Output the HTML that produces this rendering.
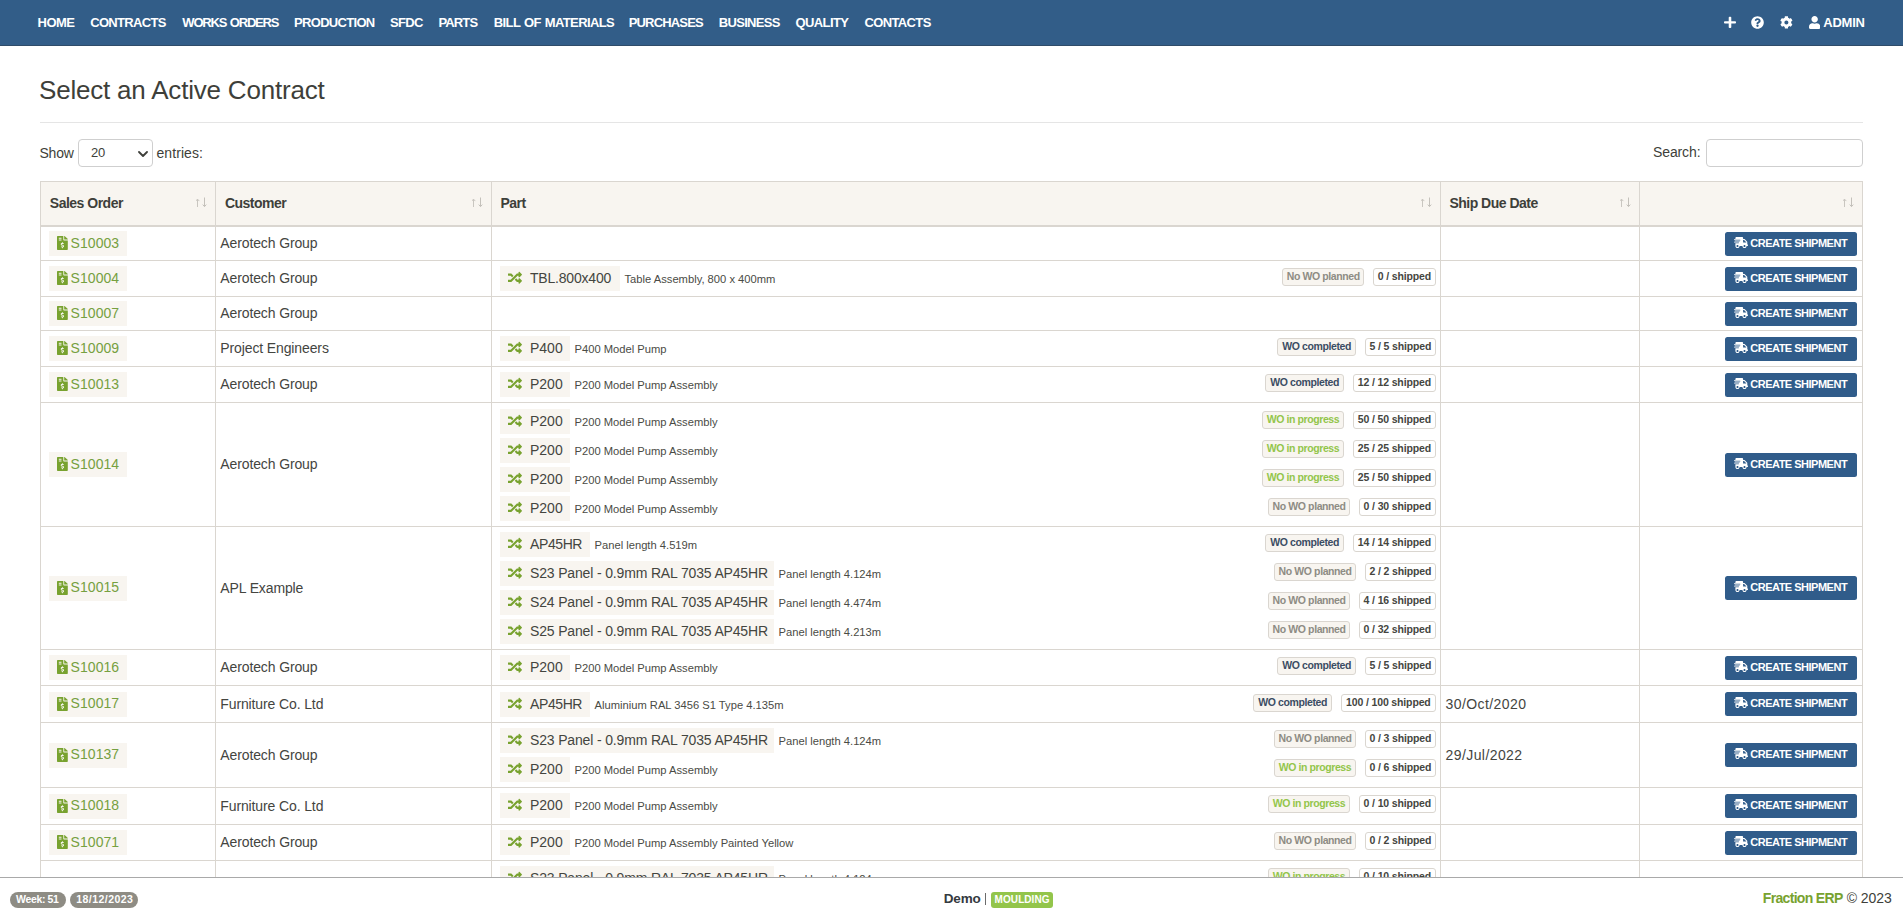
<!DOCTYPE html><html><head><meta charset="utf-8"><title>Select an Active Contract</title><style>
html,body{margin:0;padding:0;background:#fff;width:1903px;height:916px;overflow:hidden;position:relative}
body{font-family:'Liberation Sans',sans-serif;color:#3e3f3a}
.t{position:absolute;white-space:nowrap}
.a{position:absolute}
</style></head><body>
<div class="a" style="left:0;top:0;width:1903px;height:45px;background:#325d88;border-bottom:1px solid #2f4c69"></div>
<div class="t" style="left:37.5px;top:13px;font-size:13px;line-height:20px;color:#fff;font-weight:bold;letter-spacing:-0.5px">HOME</div>
<div class="t" style="left:90.2px;top:13px;font-size:13px;line-height:20px;color:#fff;font-weight:bold;letter-spacing:-0.68px">CONTRACTS</div>
<div class="t" style="left:182.3px;top:13px;font-size:13px;line-height:20px;color:#fff;font-weight:bold;letter-spacing:-1.17px;word-spacing:1px">WORKS ORDERS</div>
<div class="t" style="left:294.1px;top:13px;font-size:13px;line-height:20px;color:#fff;font-weight:bold;letter-spacing:-0.7px">PRODUCTION</div>
<div class="t" style="left:390px;top:13px;font-size:13px;line-height:20px;color:#fff;font-weight:bold;letter-spacing:-0.667px">SFDC</div>
<div class="t" style="left:438.5px;top:13px;font-size:13px;line-height:20px;color:#fff;font-weight:bold;letter-spacing:-0.875px">PARTS</div>
<div class="t" style="left:493.8px;top:13px;font-size:13px;line-height:20px;color:#fff;font-weight:bold;letter-spacing:-0.62px;word-spacing:1px">BILL OF MATERIALS</div>
<div class="t" style="left:628.7px;top:13px;font-size:13px;line-height:20px;color:#fff;font-weight:bold;letter-spacing:-0.825px">PURCHASES</div>
<div class="t" style="left:718.8px;top:13px;font-size:13px;line-height:20px;color:#fff;font-weight:bold;letter-spacing:-0.686px">BUSINESS</div>
<div class="t" style="left:795.6px;top:13px;font-size:13px;line-height:20px;color:#fff;font-weight:bold;letter-spacing:-0.62px">QUALITY</div>
<div class="t" style="left:864.4px;top:13px;font-size:13px;line-height:20px;color:#fff;font-weight:bold;letter-spacing:-0.62px">CONTACTS</div>
<div class="t" style="left:1823.3px;top:13px;font-size:13px;line-height:20px;color:#fff;font-weight:bold;letter-spacing:-0.25px">ADMIN</div>
<svg style="position:absolute;left:1723.8px;top:16px;width:12px;height:12.8px" viewBox="0 0 448 512" preserveAspectRatio="none"><path fill="#fff" d="M416 208H272V64c0-17.67-14.33-32-32-32h-32c-17.67 0-32 14.33-32 32v144H32c-17.67 0-32 14.33-32 32v32c0 17.67 14.33 32 32 32h144v144c0 17.67 14.33 32 32 32h32c17.67 0 32-14.33 32-32V304h144c17.67 0 32-14.33 32-32v-32c0-17.67-14.33-32-32-32z"/></svg>
<svg style="position:absolute;left:1750.8px;top:16.2px;width:13px;height:13px" viewBox="0 0 512 512" preserveAspectRatio="none"><path fill="#fff" d="M504 256c0 136.997-111.043 248-248 248S8 392.997 8 256C8 119.083 119.043 8 256 8s248 111.083 248 248zM262.655 90c-54.497 0-89.255 22.957-116.549 63.758-3.536 5.286-2.353 12.415 2.715 16.258l34.699 26.31c5.205 3.947 12.621 3.008 16.665-2.122 17.864-22.658 30.113-35.797 57.303-35.797 20.429 0 45.698 13.148 45.698 32.958 0 14.976-12.363 22.667-32.534 33.976C247.128 238.528 216 254.941 216 296v4c0 6.627 5.373 12 12 12h56c6.627 0 12-5.373 12-12v-1.333c0-28.462 83.186-29.647 83.186-106.667 0-58.002-60.165-102-116.531-102zM256 338c-25.365 0-46 20.635-46 46 0 25.364 20.635 46 46 46s46-20.636 46-46c0-25.365-20.635-46-46-46z"/></svg>
<svg style="position:absolute;left:1780px;top:16.2px;width:12.8px;height:12.8px" viewBox="0 0 512 512" preserveAspectRatio="none"><path fill="#fff" d="M487.4 315.7l-42.6-24.6c4.3-23.2 4.3-47 0-70.2l42.6-24.6c4.9-2.8 7.1-8.6 5.5-14-11.1-35.6-30-67.8-54.7-94.6-3.8-4.1-10-5.1-14.8-2.3L380.8 110c-17.9-15.4-38.5-27.3-60.8-35.1V25.8c0-5.6-3.9-10.5-9.4-11.7-36.7-8.2-74.3-7.800-109.2 0-5.5 1.2-9.4 6.1-9.4 11.7V75c-22.2 7.9-42.8 19.8-60.8 35.1L88.7 85.5c-4.9-2.8-11-1.9-14.8 2.3-24.7 26.7-43.6 58.9-54.7 94.6-1.7 5.4.6 11.2 5.5 14L67.3 221c-4.3 23.2-4.3 47 0 70.2l-42.6 24.6c-4.9 2.8-7.1 8.6-5.5 14 11.1 35.6 30 67.8 54.7 94.6 3.8 4.1 10 5.1 14.8 2.3l42.6-24.6c17.9 15.4 38.5 27.3 60.8 35.1v49.2c0 5.6 3.9 10.5 9.4 11.7 36.7 8.2 74.3 7.8 109.2 0 5.5-1.2 9.4-6.1 9.4-11.7v-49.2c22.2-7.9 42.8-19.8 60.8-35.1l42.6 24.6c4.9 2.8 11 1.9 14.8-2.3 24.7-26.7 43.600-58.9 54.7-94.6 1.5-5.5-.7-11.3-5.6-14.1zM256 336c-44.1 0-80-35.9-80-80s35.9-80 80-80 80 35.9 80 80-35.9 80-80 80z"/></svg>
<svg style="position:absolute;left:1809px;top:16px;width:11.3px;height:12.9px" viewBox="0 0 448 512" preserveAspectRatio="none"><path fill="#fff" d="M224 256c70.7 0 128-57.3 128-128S294.7 0 224 0 96 57.3 96 128s57.3 128 128 128zm89.6 32h-16.7c-22.2 10.2-46.9 16-72.9 16s-50.6-5.8-72.9-16h-16.7C60.2 288 0 348.2 0 422.4V464c0 26.5 21.5 48 48 48h352c26.5 0 48-21.5 48-48v-41.6c0-74.2-60.2-134.4-134.4-134.4z"/></svg>
<div class="t" style="left:39px;top:75px;font-size:26px;line-height:30px;color:#3e3f3a;font-weight:normal;letter-spacing:-0.2px">Select an Active Contract</div>
<div class="a" style="left:40px;top:122px;width:1823px;height:1px;background:#e5e5e5"></div>
<div class="t" style="left:39.5px;top:143px;font-size:14px;line-height:20px;color:#3e3f3a;font-weight:normal;letter-spacing:-0.23px">Show</div>
<div class="a" style="left:78px;top:139px;width:73px;height:26px;border:1px solid #cfcfcf;border-radius:4px;background:#fff"></div>
<div class="t" style="left:91px;top:143px;font-size:13px;line-height:20px;color:#3e3f3a;font-weight:normal;letter-spacing:-0.2px">20</div>
<svg class="a" style="left:138px;top:150.5px;width:10px;height:6px" viewBox="0 0 10 6"><path d="M1 1l4 4 4-4" fill="none" stroke="#3e3f3a" stroke-width="1.8" stroke-linecap="round" stroke-linejoin="round"/></svg>
<div class="t" style="left:156.5px;top:143px;font-size:14px;line-height:20px;color:#3e3f3a;font-weight:normal;letter-spacing:0.07px">entries:</div>
<div class="t" style="left:1653px;top:142px;font-size:14px;line-height:20px;color:#3e3f3a;font-weight:normal;letter-spacing:-0.12px">Search:</div>
<div class="a" style="left:1706px;top:139px;width:155px;height:26px;border:1px solid #cfcfcf;border-radius:4px;background:#fff"></div>
<div class="a" style="left:40px;top:181px;width:1823px;height:45px;background:#f8f5f0"></div>
<div class="a" style="left:40px;top:181px;width:1823px;height:1px;background:#dad6d0"></div>
<div class="a" style="left:40px;top:225px;width:1823px;height:2px;background:#dad6d0"></div>
<div class="t" style="left:49.800000000000004px;top:193px;font-size:14px;line-height:20px;color:#3e3f3a;font-weight:bold;letter-spacing:-0.5px">Sales Order</div>
<div class="t" style="left:224.89999999999998px;top:193px;font-size:14px;line-height:20px;color:#3e3f3a;font-weight:bold;letter-spacing:-0.5px">Customer</div>
<div class="t" style="left:500.4px;top:193px;font-size:14px;line-height:20px;color:#3e3f3a;font-weight:bold;letter-spacing:-0.5px">Part</div>
<div class="t" style="left:1449.4px;top:193px;font-size:14px;line-height:20px;color:#3e3f3a;font-weight:bold;letter-spacing:-0.5px">Ship Due Date</div>
<svg class="a" style="left:196px;top:197px;width:12px;height:11px" viewBox="0 0 12 11"><path d="M1.5 10V2.2M-0.3 4.1L1.5 2.1 3.3 4.1" fill="none" stroke="#c9c6c0" stroke-width="1"/><path d="M8.5 0.5v9M6.7 7.6L8.5 9.6 10.3 7.6" fill="none" stroke="#c4c1bb" stroke-width="1"/></svg>
<svg class="a" style="left:472px;top:197px;width:12px;height:11px" viewBox="0 0 12 11"><path d="M1.5 10V2.2M-0.3 4.1L1.5 2.1 3.3 4.1" fill="none" stroke="#c9c6c0" stroke-width="1"/><path d="M8.5 0.5v9M6.7 7.6L8.5 9.6 10.3 7.6" fill="none" stroke="#c4c1bb" stroke-width="1"/></svg>
<svg class="a" style="left:1421px;top:197px;width:12px;height:11px" viewBox="0 0 12 11"><path d="M1.5 10V2.2M-0.3 4.1L1.5 2.1 3.3 4.1" fill="none" stroke="#c9c6c0" stroke-width="1"/><path d="M8.5 0.5v9M6.7 7.6L8.5 9.6 10.3 7.6" fill="none" stroke="#c4c1bb" stroke-width="1"/></svg>
<svg class="a" style="left:1620px;top:197px;width:12px;height:11px" viewBox="0 0 12 11"><path d="M1.5 10V2.2M-0.3 4.1L1.5 2.1 3.3 4.1" fill="none" stroke="#c9c6c0" stroke-width="1"/><path d="M8.5 0.5v9M6.7 7.6L8.5 9.6 10.3 7.6" fill="none" stroke="#c4c1bb" stroke-width="1"/></svg>
<svg class="a" style="left:1843px;top:197px;width:12px;height:11px" viewBox="0 0 12 11"><path d="M1.5 10V2.2M-0.3 4.1L1.5 2.1 3.3 4.1" fill="none" stroke="#c9c6c0" stroke-width="1"/><path d="M8.5 0.5v9M6.7 7.6L8.5 9.6 10.3 7.6" fill="none" stroke="#c4c1bb" stroke-width="1"/></svg>
<div class="a" style="left:49px;top:231.0px;width:78px;height:25px;background:#f8f5f0"></div>
<svg style="position:absolute;left:56.8px;top:236.0px;width:10.8px;height:14px" viewBox="0 0 384 512" preserveAspectRatio="none"><path fill="#78a22f" d="M377 105L279.1 7c-4.5-4.5-10.6-7-17-7H256v128h128v-6.1c0-6.3-2.5-12.4-7-16.9zm-153 31V0H24C10.7 0 0 10.7 0 24v464c0 13.3 10.7 24 24 24h336c13.3 0 24-10.7 24-24V160H248c-13.2 0-24-10.8-24-24zM64 72c0-4.42 3.58-8 8-8h80c4.42 0 8 3.58 8 8v16c0 4.42-3.580 8-8 8H72c-4.42 0-8-3.58-8-8V72zm0 80v-16c0-4.42 3.58-8 8-8h80c4.42 0 8 3.58 8 8v16c0 4.42-3.58 8-8 8H72c-4.42 0-8-3.58-8-8zm144 263.88V440c0 4.42-3.58 8-8 8h-16c-4.42 0-8-3.58-8-8v-24.29c-11.29-.58-22.27-4.52-31.37-11.35-3.9-2.93-4.1-8.77-.57-12.14l11.75-11.21c2.77-2.64 6.89-2.76 10.13-.73 3.87 2.42 8.26 3.72 12.82 3.720h28.11c6.5 0 11.8-5.92 11.8-13.19 0-5.95-3.61-11.19-8.77-12.73l-45-13.5c-18.59-5.58-31.58-23.42-31.58-43.39 0-24.52 19.05-44.44 42.67-45.07V232c0-4.42 3.58-8 8-8h16c4.42 0 8 3.58 8 8v24.29c11.29.58 22.27 4.51 31.37 11.35 3.9 2.93 4.1 8.77.57 12.14l-11.75 11.21c-2.77 2.64-6.89 2.76-10.13.73-3.87-2.43-8.26-3.72-12.82-3.72h-28.11c-6.5 0-11.8 5.92-11.8 13.19 0 5.95 3.61 11.19 8.77 12.73l45 13.5c18.59 5.58 31.58 23.42 31.58 43.39 0 24.53-19.05 44.44-42.67 45.07z"/></svg>
<div class="t" style="left:70.6px;top:233px;font-size:14px;line-height:20px;color:#76a040;font-weight:normal;letter-spacing:0.05px">S10003</div>
<div class="t" style="left:220.3px;top:233px;font-size:14px;line-height:20px;color:#44453f;font-weight:normal;letter-spacing:-0.12px">Aerotech Group</div>
<div class="a" style="left:1725px;top:231.7px;width:132px;height:24px;background:#305c8a;border-radius:2.5px"></div>
<svg style="position:absolute;left:1733.9px;top:236.7px;width:14px;height:11px" viewBox="0 0 640 512" preserveAspectRatio="none"><path fill="#fff" d="M624 352h-16V243.9c0-12.7-5.1-24.9-14.1-33.9L494 110.1c-9-9-21.2-14.1-33.9-14.1H416V48c0-26.5-21.5-48-48-48H112C85.5 0 64 21.5 64 48v48H8c-4.4 0-8 3.6-8 8v16c0 4.4 3.6 8 8 8h272c4.4 0 8 3.6 8 8v16c0 4.4-3.6 8-8 8H40c-4.4 0-8 3.6-8 8v16c0 4.4 3.6 8 8 8h208c4.4 0 8 3.6 8 8v16c0 4.4-3.6 8-8 8H8c-4.4 0-8 3.6-8 8v16c0 4.4 3.6 8 8 8h208c4.4 0 8 3.6 8 8v16c0 4.4-3.6 8-8 8H64v128c0 53 43 96 96 96s96-43 96-96h128c0 53 43 96 96 96s96-43 96-96h48c8.8 0 16-7.2 16-16v-32c0-8.8-7.2-16-16-16zM160 464c-26.5 0-48-21.5-48-48s21.5-48 48-48 48 21.5 48 48-21.5 48-48 48zm320 0c-26.5 0-48-21.5-48-48s21.5-48 48-48 48 21.5 48 48-21.5 48-48 48zm80-208H416V144h44.1l99.9 99.9V256z"/></svg>
<div class="t" style="left:1750.3px;top:233px;font-size:11px;line-height:20px;color:#fff;font-weight:bold;letter-spacing:-0.5px">CREATE SHIPMENT</div>
<div class="a" style="left:40px;top:260px;width:1823px;height:1px;background:#dad6d0"></div>
<div class="a" style="left:49px;top:266.0px;width:78px;height:25px;background:#f8f5f0"></div>
<svg style="position:absolute;left:56.8px;top:271.0px;width:10.8px;height:14px" viewBox="0 0 384 512" preserveAspectRatio="none"><path fill="#78a22f" d="M377 105L279.1 7c-4.5-4.5-10.6-7-17-7H256v128h128v-6.1c0-6.3-2.5-12.4-7-16.9zm-153 31V0H24C10.7 0 0 10.7 0 24v464c0 13.3 10.7 24 24 24h336c13.3 0 24-10.7 24-24V160H248c-13.2 0-24-10.8-24-24zM64 72c0-4.42 3.58-8 8-8h80c4.42 0 8 3.58 8 8v16c0 4.42-3.580 8-8 8H72c-4.42 0-8-3.58-8-8V72zm0 80v-16c0-4.42 3.58-8 8-8h80c4.42 0 8 3.58 8 8v16c0 4.42-3.58 8-8 8H72c-4.42 0-8-3.58-8-8zm144 263.88V440c0 4.42-3.58 8-8 8h-16c-4.42 0-8-3.58-8-8v-24.29c-11.29-.58-22.27-4.52-31.37-11.35-3.9-2.93-4.1-8.77-.57-12.14l11.75-11.21c2.77-2.64 6.89-2.76 10.13-.73 3.87 2.42 8.26 3.72 12.82 3.720h28.11c6.5 0 11.8-5.92 11.8-13.19 0-5.95-3.61-11.19-8.77-12.73l-45-13.5c-18.59-5.58-31.58-23.42-31.58-43.39 0-24.52 19.05-44.44 42.67-45.07V232c0-4.42 3.58-8 8-8h16c4.42 0 8 3.58 8 8v24.29c11.29.58 22.27 4.51 31.37 11.35 3.9 2.93 4.1 8.77.57 12.14l-11.75 11.21c-2.77 2.64-6.89 2.76-10.13.73-3.87-2.43-8.26-3.72-12.82-3.72h-28.11c-6.5 0-11.8 5.92-11.8 13.19 0 5.95 3.61 11.19 8.77 12.73l45 13.5c18.59 5.58 31.58 23.42 31.58 43.39 0 24.53-19.05 44.44-42.67 45.07z"/></svg>
<div class="t" style="left:70.6px;top:268px;font-size:14px;line-height:20px;color:#76a040;font-weight:normal;letter-spacing:0.05px">S10004</div>
<div class="t" style="left:220.3px;top:268px;font-size:14px;line-height:20px;color:#44453f;font-weight:normal;letter-spacing:-0.12px">Aerotech Group</div>
<div class="a" style="left:1725px;top:266.7px;width:132px;height:24px;background:#305c8a;border-radius:2.5px"></div>
<svg style="position:absolute;left:1733.9px;top:271.7px;width:14px;height:11px" viewBox="0 0 640 512" preserveAspectRatio="none"><path fill="#fff" d="M624 352h-16V243.9c0-12.7-5.1-24.9-14.1-33.9L494 110.1c-9-9-21.2-14.1-33.9-14.1H416V48c0-26.5-21.5-48-48-48H112C85.5 0 64 21.5 64 48v48H8c-4.4 0-8 3.6-8 8v16c0 4.4 3.6 8 8 8h272c4.4 0 8 3.6 8 8v16c0 4.4-3.6 8-8 8H40c-4.4 0-8 3.6-8 8v16c0 4.4 3.6 8 8 8h208c4.4 0 8 3.6 8 8v16c0 4.4-3.6 8-8 8H8c-4.4 0-8 3.6-8 8v16c0 4.4 3.6 8 8 8h208c4.4 0 8 3.6 8 8v16c0 4.4-3.6 8-8 8H64v128c0 53 43 96 96 96s96-43 96-96h128c0 53 43 96 96 96s96-43 96-96h48c8.8 0 16-7.2 16-16v-32c0-8.8-7.2-16-16-16zM160 464c-26.5 0-48-21.5-48-48s21.5-48 48-48 48 21.5 48 48-21.5 48-48 48zm320 0c-26.5 0-48-21.5-48-48s21.5-48 48-48 48 21.5 48 48-21.5 48-48 48zm80-208H416V144h44.1l99.9 99.9V256z"/></svg>
<div class="t" style="left:1750.3px;top:268px;font-size:11px;line-height:20px;color:#fff;font-weight:bold;letter-spacing:-0.5px">CREATE SHIPMENT</div>
<div class="a" style="left:500px;top:266px;width:120px;height:25px;background:#f8f5f0"></div>
<svg style="position:absolute;left:507.9px;top:271.3px;width:14px;height:13.5px" viewBox="0 0 512 512" preserveAspectRatio="none"><path fill="#78a22f" d="M504.971 359.029c9.373 9.373 9.373 24.569 0 33.941l-80 79.984c-15.01 15.01-40.971 4.49-40.971-16.971V416h-58.785a12.004 12.004 0 0 1-8.773-3.812l-70.556-75.596 53.333-57.143L352 336h32v-39.981c0-21.438 25.943-31.998 40.971-16.971l80 79.981zM12 176h84l52.781 56.551 53.333-57.143-70.556-75.596A11.999 11.999 0 0 0 122.785 96H12c-6.627 0-12 5.373-12 12v56c0 6.627 5.373 12 12 12zm372 0v39.984c0 21.460 25.961 31.980 40.971 16.971l80-79.984c9.373-9.373 9.373-24.569 0-33.941l-80-79.981C409.943 24.021 384 34.582 384 56.019V96h-58.785a12.004 12.004 0 0 0-8.773 3.812L96 336H12c-6.627 0-12 5.373-12 12v56c0 6.627 5.373 12 12 12h110.785c3.326 0 6.503-1.381 8.773-3.812L352 176h32z"/></svg>
<div class="t" style="left:530px;top:268px;font-size:14px;line-height:20px;color:#44453f;font-weight:normal;letter-spacing:-0.2px">TBL.800x400</div>
<div class="t" style="left:624.5px;top:269px;font-size:11.2px;line-height:20px;color:#4a4b45;font-weight:normal;letter-spacing:0px">Table Assembly, 800 x 400mm</div>
<div class="a" style="left:1373.3px;top:268px;width:62.3px;height:18px;box-sizing:border-box;border:1px solid #dad6d0;border-radius:3px;background:#fff"></div>
<div class="t" style="left:1373.3px;top:269.6px;width:62.3px;text-align:center;font-size:10.5px;line-height:12px;font-weight:bold;color:#45463f;letter-spacing:-0.14px">0 / shipped</div>
<div class="a" style="left:1282.3px;top:268px;width:82px;height:18px;box-sizing:border-box;border:1px solid #dad6d0;border-radius:3px;background:#f8f5f0"></div>
<div class="t" style="left:1282.3px;top:269.6px;width:82px;text-align:center;font-size:10.5px;line-height:12px;font-weight:bold;color:#8e8c84;letter-spacing:-0.4px">No WO planned</div>
<div class="a" style="left:40px;top:296px;width:1823px;height:1px;background:#dad6d0"></div>
<div class="a" style="left:49px;top:301.0px;width:78px;height:25px;background:#f8f5f0"></div>
<svg style="position:absolute;left:56.8px;top:306.0px;width:10.8px;height:14px" viewBox="0 0 384 512" preserveAspectRatio="none"><path fill="#78a22f" d="M377 105L279.1 7c-4.5-4.5-10.6-7-17-7H256v128h128v-6.1c0-6.3-2.5-12.4-7-16.9zm-153 31V0H24C10.7 0 0 10.7 0 24v464c0 13.3 10.7 24 24 24h336c13.3 0 24-10.7 24-24V160H248c-13.2 0-24-10.8-24-24zM64 72c0-4.42 3.58-8 8-8h80c4.42 0 8 3.58 8 8v16c0 4.42-3.580 8-8 8H72c-4.42 0-8-3.58-8-8V72zm0 80v-16c0-4.42 3.58-8 8-8h80c4.42 0 8 3.58 8 8v16c0 4.42-3.58 8-8 8H72c-4.42 0-8-3.58-8-8zm144 263.88V440c0 4.42-3.58 8-8 8h-16c-4.42 0-8-3.58-8-8v-24.29c-11.29-.58-22.27-4.52-31.37-11.35-3.9-2.93-4.1-8.77-.57-12.14l11.75-11.21c2.77-2.64 6.89-2.76 10.13-.73 3.87 2.42 8.26 3.72 12.82 3.720h28.11c6.5 0 11.8-5.92 11.8-13.19 0-5.95-3.61-11.19-8.77-12.73l-45-13.5c-18.59-5.58-31.58-23.42-31.58-43.39 0-24.52 19.05-44.44 42.67-45.07V232c0-4.42 3.58-8 8-8h16c4.42 0 8 3.58 8 8v24.29c11.29.58 22.27 4.51 31.37 11.35 3.9 2.93 4.1 8.77.57 12.14l-11.75 11.21c-2.77 2.64-6.89 2.76-10.13.73-3.87-2.43-8.26-3.72-12.82-3.72h-28.11c-6.5 0-11.8 5.92-11.8 13.19 0 5.95 3.61 11.19 8.77 12.73l45 13.5c18.59 5.58 31.58 23.42 31.58 43.39 0 24.53-19.05 44.44-42.67 45.07z"/></svg>
<div class="t" style="left:70.6px;top:303px;font-size:14px;line-height:20px;color:#76a040;font-weight:normal;letter-spacing:0.05px">S10007</div>
<div class="t" style="left:220.3px;top:303px;font-size:14px;line-height:20px;color:#44453f;font-weight:normal;letter-spacing:-0.12px">Aerotech Group</div>
<div class="a" style="left:1725px;top:301.7px;width:132px;height:24px;background:#305c8a;border-radius:2.5px"></div>
<svg style="position:absolute;left:1733.9px;top:306.7px;width:14px;height:11px" viewBox="0 0 640 512" preserveAspectRatio="none"><path fill="#fff" d="M624 352h-16V243.9c0-12.7-5.1-24.9-14.1-33.9L494 110.1c-9-9-21.2-14.1-33.9-14.1H416V48c0-26.5-21.5-48-48-48H112C85.5 0 64 21.5 64 48v48H8c-4.4 0-8 3.6-8 8v16c0 4.4 3.6 8 8 8h272c4.4 0 8 3.6 8 8v16c0 4.4-3.6 8-8 8H40c-4.4 0-8 3.6-8 8v16c0 4.4 3.6 8 8 8h208c4.4 0 8 3.6 8 8v16c0 4.4-3.6 8-8 8H8c-4.4 0-8 3.6-8 8v16c0 4.4 3.6 8 8 8h208c4.4 0 8 3.6 8 8v16c0 4.4-3.6 8-8 8H64v128c0 53 43 96 96 96s96-43 96-96h128c0 53 43 96 96 96s96-43 96-96h48c8.8 0 16-7.2 16-16v-32c0-8.8-7.2-16-16-16zM160 464c-26.5 0-48-21.5-48-48s21.5-48 48-48 48 21.5 48 48-21.5 48-48 48zm320 0c-26.5 0-48-21.5-48-48s21.5-48 48-48 48 21.5 48 48-21.5 48-48 48zm80-208H416V144h44.1l99.9 99.9V256z"/></svg>
<div class="t" style="left:1750.3px;top:303px;font-size:11px;line-height:20px;color:#fff;font-weight:bold;letter-spacing:-0.5px">CREATE SHIPMENT</div>
<div class="a" style="left:40px;top:330px;width:1823px;height:1px;background:#dad6d0"></div>
<div class="a" style="left:49px;top:336.0px;width:78px;height:25px;background:#f8f5f0"></div>
<svg style="position:absolute;left:56.8px;top:341.0px;width:10.8px;height:14px" viewBox="0 0 384 512" preserveAspectRatio="none"><path fill="#78a22f" d="M377 105L279.1 7c-4.5-4.5-10.6-7-17-7H256v128h128v-6.1c0-6.3-2.5-12.4-7-16.9zm-153 31V0H24C10.7 0 0 10.7 0 24v464c0 13.3 10.7 24 24 24h336c13.3 0 24-10.7 24-24V160H248c-13.2 0-24-10.8-24-24zM64 72c0-4.42 3.58-8 8-8h80c4.42 0 8 3.58 8 8v16c0 4.42-3.580 8-8 8H72c-4.42 0-8-3.58-8-8V72zm0 80v-16c0-4.42 3.58-8 8-8h80c4.42 0 8 3.58 8 8v16c0 4.42-3.58 8-8 8H72c-4.42 0-8-3.58-8-8zm144 263.88V440c0 4.42-3.58 8-8 8h-16c-4.42 0-8-3.58-8-8v-24.29c-11.29-.58-22.27-4.52-31.37-11.35-3.9-2.93-4.1-8.77-.57-12.14l11.75-11.21c2.77-2.64 6.89-2.76 10.13-.73 3.87 2.42 8.26 3.72 12.82 3.720h28.11c6.5 0 11.8-5.92 11.8-13.19 0-5.95-3.61-11.19-8.77-12.73l-45-13.5c-18.59-5.58-31.58-23.42-31.58-43.39 0-24.52 19.05-44.44 42.67-45.07V232c0-4.42 3.58-8 8-8h16c4.42 0 8 3.58 8 8v24.29c11.29.58 22.27 4.51 31.37 11.35 3.9 2.93 4.1 8.77.57 12.14l-11.75 11.21c-2.77 2.64-6.89 2.76-10.13.73-3.87-2.43-8.26-3.72-12.82-3.72h-28.11c-6.5 0-11.8 5.92-11.8 13.19 0 5.95 3.61 11.19 8.77 12.73l45 13.5c18.59 5.58 31.58 23.42 31.58 43.39 0 24.53-19.05 44.44-42.67 45.07z"/></svg>
<div class="t" style="left:70.6px;top:338px;font-size:14px;line-height:20px;color:#76a040;font-weight:normal;letter-spacing:0.05px">S10009</div>
<div class="t" style="left:220.3px;top:338px;font-size:14px;line-height:20px;color:#44453f;font-weight:normal;letter-spacing:-0.12px">Project Engineers</div>
<div class="a" style="left:1725px;top:336.7px;width:132px;height:24px;background:#305c8a;border-radius:2.5px"></div>
<svg style="position:absolute;left:1733.9px;top:341.7px;width:14px;height:11px" viewBox="0 0 640 512" preserveAspectRatio="none"><path fill="#fff" d="M624 352h-16V243.9c0-12.7-5.1-24.9-14.1-33.9L494 110.1c-9-9-21.2-14.1-33.9-14.1H416V48c0-26.5-21.5-48-48-48H112C85.5 0 64 21.5 64 48v48H8c-4.4 0-8 3.6-8 8v16c0 4.4 3.6 8 8 8h272c4.4 0 8 3.6 8 8v16c0 4.4-3.6 8-8 8H40c-4.4 0-8 3.6-8 8v16c0 4.4 3.6 8 8 8h208c4.4 0 8 3.6 8 8v16c0 4.4-3.6 8-8 8H8c-4.4 0-8 3.6-8 8v16c0 4.4 3.6 8 8 8h208c4.4 0 8 3.6 8 8v16c0 4.4-3.6 8-8 8H64v128c0 53 43 96 96 96s96-43 96-96h128c0 53 43 96 96 96s96-43 96-96h48c8.8 0 16-7.2 16-16v-32c0-8.8-7.2-16-16-16zM160 464c-26.5 0-48-21.5-48-48s21.5-48 48-48 48 21.5 48 48-21.5 48-48 48zm320 0c-26.5 0-48-21.5-48-48s21.5-48 48-48 48 21.5 48 48-21.5 48-48 48zm80-208H416V144h44.1l99.9 99.9V256z"/></svg>
<div class="t" style="left:1750.3px;top:338px;font-size:11px;line-height:20px;color:#fff;font-weight:bold;letter-spacing:-0.5px">CREATE SHIPMENT</div>
<div class="a" style="left:500px;top:336px;width:70px;height:25px;background:#f8f5f0"></div>
<svg style="position:absolute;left:507.9px;top:341.3px;width:14px;height:13.5px" viewBox="0 0 512 512" preserveAspectRatio="none"><path fill="#78a22f" d="M504.971 359.029c9.373 9.373 9.373 24.569 0 33.941l-80 79.984c-15.01 15.01-40.971 4.49-40.971-16.971V416h-58.785a12.004 12.004 0 0 1-8.773-3.812l-70.556-75.596 53.333-57.143L352 336h32v-39.981c0-21.438 25.943-31.998 40.971-16.971l80 79.981zM12 176h84l52.781 56.551 53.333-57.143-70.556-75.596A11.999 11.999 0 0 0 122.785 96H12c-6.627 0-12 5.373-12 12v56c0 6.627 5.373 12 12 12zm372 0v39.984c0 21.460 25.961 31.980 40.971 16.971l80-79.984c9.373-9.373 9.373-24.569 0-33.941l-80-79.981C409.943 24.021 384 34.582 384 56.019V96h-58.785a12.004 12.004 0 0 0-8.773 3.812L96 336H12c-6.627 0-12 5.373-12 12v56c0 6.627 5.373 12 12 12h110.785c3.326 0 6.503-1.381 8.773-3.812L352 176h32z"/></svg>
<div class="t" style="left:530px;top:338px;font-size:14px;line-height:20px;color:#44453f;font-weight:normal;letter-spacing:0px">P400</div>
<div class="t" style="left:574.5px;top:339px;font-size:11.2px;line-height:20px;color:#4a4b45;font-weight:normal;letter-spacing:0px">P400 Model Pump</div>
<div class="a" style="left:1365.1px;top:338px;width:70.5px;height:18px;box-sizing:border-box;border:1px solid #dad6d0;border-radius:3px;background:#fff"></div>
<div class="t" style="left:1365.1px;top:339.6px;width:70.5px;text-align:center;font-size:10.5px;line-height:12px;font-weight:bold;color:#45463f;letter-spacing:-0.14px">5 / 5 shipped</div>
<div class="a" style="left:1277.1px;top:338px;width:79px;height:18px;box-sizing:border-box;border:1px solid #dad6d0;border-radius:3px;background:#f8f5f0"></div>
<div class="t" style="left:1277.1px;top:339.6px;width:79px;text-align:center;font-size:10.5px;line-height:12px;font-weight:bold;color:#3b4d63;letter-spacing:-0.4px">WO completed</div>
<div class="a" style="left:40px;top:366px;width:1823px;height:1px;background:#dad6d0"></div>
<div class="a" style="left:49px;top:372.0px;width:78px;height:25px;background:#f8f5f0"></div>
<svg style="position:absolute;left:56.8px;top:377.0px;width:10.8px;height:14px" viewBox="0 0 384 512" preserveAspectRatio="none"><path fill="#78a22f" d="M377 105L279.1 7c-4.5-4.5-10.6-7-17-7H256v128h128v-6.1c0-6.3-2.5-12.4-7-16.9zm-153 31V0H24C10.7 0 0 10.7 0 24v464c0 13.3 10.7 24 24 24h336c13.3 0 24-10.7 24-24V160H248c-13.2 0-24-10.8-24-24zM64 72c0-4.42 3.58-8 8-8h80c4.42 0 8 3.58 8 8v16c0 4.42-3.580 8-8 8H72c-4.42 0-8-3.58-8-8V72zm0 80v-16c0-4.42 3.58-8 8-8h80c4.42 0 8 3.58 8 8v16c0 4.42-3.58 8-8 8H72c-4.42 0-8-3.58-8-8zm144 263.88V440c0 4.42-3.58 8-8 8h-16c-4.42 0-8-3.58-8-8v-24.29c-11.29-.58-22.27-4.52-31.37-11.35-3.9-2.93-4.1-8.77-.57-12.14l11.75-11.21c2.77-2.64 6.89-2.76 10.13-.73 3.87 2.42 8.26 3.72 12.82 3.720h28.11c6.5 0 11.8-5.92 11.8-13.19 0-5.95-3.61-11.19-8.77-12.73l-45-13.5c-18.59-5.58-31.58-23.42-31.58-43.39 0-24.52 19.05-44.44 42.67-45.07V232c0-4.42 3.58-8 8-8h16c4.42 0 8 3.58 8 8v24.29c11.29.58 22.27 4.51 31.37 11.35 3.9 2.93 4.1 8.77.57 12.14l-11.75 11.21c-2.77 2.64-6.89 2.76-10.13.73-3.87-2.43-8.26-3.72-12.82-3.72h-28.11c-6.5 0-11.8 5.92-11.8 13.19 0 5.95 3.61 11.19 8.77 12.73l45 13.5c18.59 5.58 31.58 23.42 31.58 43.39 0 24.53-19.05 44.44-42.67 45.07z"/></svg>
<div class="t" style="left:70.6px;top:374px;font-size:14px;line-height:20px;color:#76a040;font-weight:normal;letter-spacing:0.05px">S10013</div>
<div class="t" style="left:220.3px;top:374px;font-size:14px;line-height:20px;color:#44453f;font-weight:normal;letter-spacing:-0.12px">Aerotech Group</div>
<div class="a" style="left:1725px;top:372.7px;width:132px;height:24px;background:#305c8a;border-radius:2.5px"></div>
<svg style="position:absolute;left:1733.9px;top:377.7px;width:14px;height:11px" viewBox="0 0 640 512" preserveAspectRatio="none"><path fill="#fff" d="M624 352h-16V243.9c0-12.7-5.1-24.9-14.1-33.9L494 110.1c-9-9-21.2-14.1-33.9-14.1H416V48c0-26.5-21.5-48-48-48H112C85.5 0 64 21.5 64 48v48H8c-4.4 0-8 3.6-8 8v16c0 4.4 3.6 8 8 8h272c4.4 0 8 3.6 8 8v16c0 4.4-3.6 8-8 8H40c-4.4 0-8 3.6-8 8v16c0 4.4 3.6 8 8 8h208c4.4 0 8 3.6 8 8v16c0 4.4-3.6 8-8 8H8c-4.4 0-8 3.6-8 8v16c0 4.4 3.6 8 8 8h208c4.4 0 8 3.6 8 8v16c0 4.4-3.6 8-8 8H64v128c0 53 43 96 96 96s96-43 96-96h128c0 53 43 96 96 96s96-43 96-96h48c8.8 0 16-7.2 16-16v-32c0-8.8-7.2-16-16-16zM160 464c-26.5 0-48-21.5-48-48s21.5-48 48-48 48 21.5 48 48-21.5 48-48 48zm320 0c-26.5 0-48-21.5-48-48s21.5-48 48-48 48 21.5 48 48-21.5 48-48 48zm80-208H416V144h44.1l99.9 99.9V256z"/></svg>
<div class="t" style="left:1750.3px;top:374px;font-size:11px;line-height:20px;color:#fff;font-weight:bold;letter-spacing:-0.5px">CREATE SHIPMENT</div>
<div class="a" style="left:500px;top:372px;width:70px;height:25px;background:#f8f5f0"></div>
<svg style="position:absolute;left:507.9px;top:377.3px;width:14px;height:13.5px" viewBox="0 0 512 512" preserveAspectRatio="none"><path fill="#78a22f" d="M504.971 359.029c9.373 9.373 9.373 24.569 0 33.941l-80 79.984c-15.01 15.01-40.971 4.49-40.971-16.971V416h-58.785a12.004 12.004 0 0 1-8.773-3.812l-70.556-75.596 53.333-57.143L352 336h32v-39.981c0-21.438 25.943-31.998 40.971-16.971l80 79.981zM12 176h84l52.781 56.551 53.333-57.143-70.556-75.596A11.999 11.999 0 0 0 122.785 96H12c-6.627 0-12 5.373-12 12v56c0 6.627 5.373 12 12 12zm372 0v39.984c0 21.460 25.961 31.980 40.971 16.971l80-79.984c9.373-9.373 9.373-24.569 0-33.941l-80-79.981C409.943 24.021 384 34.582 384 56.019V96h-58.785a12.004 12.004 0 0 0-8.773 3.812L96 336H12c-6.627 0-12 5.373-12 12v56c0 6.627 5.373 12 12 12h110.785c3.326 0 6.503-1.381 8.773-3.812L352 176h32z"/></svg>
<div class="t" style="left:530px;top:374px;font-size:14px;line-height:20px;color:#44453f;font-weight:normal;letter-spacing:0px">P200</div>
<div class="t" style="left:574.5px;top:375px;font-size:11.2px;line-height:20px;color:#4a4b45;font-weight:normal;letter-spacing:0px">P200 Model Pump Assembly</div>
<div class="a" style="left:1353.1px;top:374px;width:82.5px;height:18px;box-sizing:border-box;border:1px solid #dad6d0;border-radius:3px;background:#fff"></div>
<div class="t" style="left:1353.1px;top:375.6px;width:82.5px;text-align:center;font-size:10.5px;line-height:12px;font-weight:bold;color:#45463f;letter-spacing:-0.14px">12 / 12 shipped</div>
<div class="a" style="left:1265.1px;top:374px;width:79px;height:18px;box-sizing:border-box;border:1px solid #dad6d0;border-radius:3px;background:#f8f5f0"></div>
<div class="t" style="left:1265.1px;top:375.6px;width:79px;text-align:center;font-size:10.5px;line-height:12px;font-weight:bold;color:#3b4d63;letter-spacing:-0.4px">WO completed</div>
<div class="a" style="left:40px;top:402px;width:1823px;height:1px;background:#dad6d0"></div>
<div class="a" style="left:49px;top:452.0px;width:78px;height:25px;background:#f8f5f0"></div>
<svg style="position:absolute;left:56.8px;top:457.0px;width:10.8px;height:14px" viewBox="0 0 384 512" preserveAspectRatio="none"><path fill="#78a22f" d="M377 105L279.1 7c-4.5-4.5-10.6-7-17-7H256v128h128v-6.1c0-6.3-2.5-12.4-7-16.9zm-153 31V0H24C10.7 0 0 10.7 0 24v464c0 13.3 10.7 24 24 24h336c13.3 0 24-10.7 24-24V160H248c-13.2 0-24-10.8-24-24zM64 72c0-4.42 3.58-8 8-8h80c4.42 0 8 3.58 8 8v16c0 4.42-3.580 8-8 8H72c-4.42 0-8-3.58-8-8V72zm0 80v-16c0-4.42 3.58-8 8-8h80c4.42 0 8 3.58 8 8v16c0 4.42-3.58 8-8 8H72c-4.42 0-8-3.58-8-8zm144 263.88V440c0 4.42-3.58 8-8 8h-16c-4.42 0-8-3.58-8-8v-24.29c-11.29-.58-22.27-4.52-31.37-11.35-3.9-2.93-4.1-8.77-.57-12.14l11.75-11.21c2.77-2.64 6.89-2.76 10.13-.73 3.87 2.42 8.26 3.72 12.82 3.720h28.11c6.5 0 11.8-5.92 11.8-13.19 0-5.95-3.61-11.19-8.77-12.73l-45-13.5c-18.59-5.58-31.58-23.42-31.58-43.39 0-24.52 19.05-44.44 42.67-45.07V232c0-4.42 3.58-8 8-8h16c4.42 0 8 3.58 8 8v24.29c11.29.58 22.27 4.51 31.37 11.35 3.9 2.93 4.1 8.77.57 12.14l-11.75 11.21c-2.77 2.64-6.89 2.76-10.13.73-3.87-2.43-8.26-3.72-12.82-3.72h-28.11c-6.5 0-11.8 5.92-11.8 13.19 0 5.95 3.61 11.19 8.77 12.73l45 13.5c18.59 5.58 31.58 23.42 31.58 43.39 0 24.53-19.05 44.44-42.67 45.07z"/></svg>
<div class="t" style="left:70.6px;top:454px;font-size:14px;line-height:20px;color:#76a040;font-weight:normal;letter-spacing:0.05px">S10014</div>
<div class="t" style="left:220.3px;top:454px;font-size:14px;line-height:20px;color:#44453f;font-weight:normal;letter-spacing:-0.12px">Aerotech Group</div>
<div class="a" style="left:1725px;top:452.7px;width:132px;height:24px;background:#305c8a;border-radius:2.5px"></div>
<svg style="position:absolute;left:1733.9px;top:457.7px;width:14px;height:11px" viewBox="0 0 640 512" preserveAspectRatio="none"><path fill="#fff" d="M624 352h-16V243.9c0-12.7-5.1-24.9-14.1-33.9L494 110.1c-9-9-21.2-14.1-33.9-14.1H416V48c0-26.5-21.5-48-48-48H112C85.5 0 64 21.5 64 48v48H8c-4.4 0-8 3.6-8 8v16c0 4.4 3.6 8 8 8h272c4.4 0 8 3.6 8 8v16c0 4.4-3.6 8-8 8H40c-4.4 0-8 3.6-8 8v16c0 4.4 3.6 8 8 8h208c4.4 0 8 3.6 8 8v16c0 4.4-3.6 8-8 8H8c-4.4 0-8 3.6-8 8v16c0 4.4 3.6 8 8 8h208c4.4 0 8 3.6 8 8v16c0 4.4-3.6 8-8 8H64v128c0 53 43 96 96 96s96-43 96-96h128c0 53 43 96 96 96s96-43 96-96h48c8.8 0 16-7.2 16-16v-32c0-8.8-7.2-16-16-16zM160 464c-26.5 0-48-21.5-48-48s21.5-48 48-48 48 21.5 48 48-21.5 48-48 48zm320 0c-26.5 0-48-21.5-48-48s21.5-48 48-48 48 21.5 48 48-21.5 48-48 48zm80-208H416V144h44.1l99.9 99.9V256z"/></svg>
<div class="t" style="left:1750.3px;top:454px;font-size:11px;line-height:20px;color:#fff;font-weight:bold;letter-spacing:-0.5px">CREATE SHIPMENT</div>
<div class="a" style="left:500px;top:409px;width:70px;height:25px;background:#f8f5f0"></div>
<svg style="position:absolute;left:507.9px;top:414.3px;width:14px;height:13.5px" viewBox="0 0 512 512" preserveAspectRatio="none"><path fill="#78a22f" d="M504.971 359.029c9.373 9.373 9.373 24.569 0 33.941l-80 79.984c-15.01 15.01-40.971 4.49-40.971-16.971V416h-58.785a12.004 12.004 0 0 1-8.773-3.812l-70.556-75.596 53.333-57.143L352 336h32v-39.981c0-21.438 25.943-31.998 40.971-16.971l80 79.981zM12 176h84l52.781 56.551 53.333-57.143-70.556-75.596A11.999 11.999 0 0 0 122.785 96H12c-6.627 0-12 5.373-12 12v56c0 6.627 5.373 12 12 12zm372 0v39.984c0 21.460 25.961 31.980 40.971 16.971l80-79.984c9.373-9.373 9.373-24.569 0-33.941l-80-79.981C409.943 24.021 384 34.582 384 56.019V96h-58.785a12.004 12.004 0 0 0-8.773 3.812L96 336H12c-6.627 0-12 5.373-12 12v56c0 6.627 5.373 12 12 12h110.785c3.326 0 6.503-1.381 8.773-3.812L352 176h32z"/></svg>
<div class="t" style="left:530px;top:411px;font-size:14px;line-height:20px;color:#44453f;font-weight:normal;letter-spacing:0px">P200</div>
<div class="t" style="left:574.5px;top:412px;font-size:11.2px;line-height:20px;color:#4a4b45;font-weight:normal;letter-spacing:0px">P200 Model Pump Assembly</div>
<div class="a" style="left:1353.1px;top:411px;width:82.5px;height:18px;box-sizing:border-box;border:1px solid #dad6d0;border-radius:3px;background:#fff"></div>
<div class="t" style="left:1353.1px;top:412.6px;width:82.5px;text-align:center;font-size:10.5px;line-height:12px;font-weight:bold;color:#45463f;letter-spacing:-0.14px">50 / 50 shipped</div>
<div class="a" style="left:1261.8px;top:411px;width:82.3px;height:18px;box-sizing:border-box;border:1px solid #dad6d0;border-radius:3px;background:#f8f5f0"></div>
<div class="t" style="left:1261.8px;top:412.6px;width:82.3px;text-align:center;font-size:10.5px;line-height:12px;font-weight:bold;color:#93c54b;letter-spacing:-0.4px">WO in progress</div>
<div class="a" style="left:500px;top:438px;width:70px;height:25px;background:#f8f5f0"></div>
<svg style="position:absolute;left:507.9px;top:443.3px;width:14px;height:13.5px" viewBox="0 0 512 512" preserveAspectRatio="none"><path fill="#78a22f" d="M504.971 359.029c9.373 9.373 9.373 24.569 0 33.941l-80 79.984c-15.01 15.01-40.971 4.49-40.971-16.971V416h-58.785a12.004 12.004 0 0 1-8.773-3.812l-70.556-75.596 53.333-57.143L352 336h32v-39.981c0-21.438 25.943-31.998 40.971-16.971l80 79.981zM12 176h84l52.781 56.551 53.333-57.143-70.556-75.596A11.999 11.999 0 0 0 122.785 96H12c-6.627 0-12 5.373-12 12v56c0 6.627 5.373 12 12 12zm372 0v39.984c0 21.460 25.961 31.980 40.971 16.971l80-79.984c9.373-9.373 9.373-24.569 0-33.941l-80-79.981C409.943 24.021 384 34.582 384 56.019V96h-58.785a12.004 12.004 0 0 0-8.773 3.812L96 336H12c-6.627 0-12 5.373-12 12v56c0 6.627 5.373 12 12 12h110.785c3.326 0 6.503-1.381 8.773-3.812L352 176h32z"/></svg>
<div class="t" style="left:530px;top:440px;font-size:14px;line-height:20px;color:#44453f;font-weight:normal;letter-spacing:0px">P200</div>
<div class="t" style="left:574.5px;top:441px;font-size:11.2px;line-height:20px;color:#4a4b45;font-weight:normal;letter-spacing:0px">P200 Model Pump Assembly</div>
<div class="a" style="left:1353.1px;top:440px;width:82.5px;height:18px;box-sizing:border-box;border:1px solid #dad6d0;border-radius:3px;background:#fff"></div>
<div class="t" style="left:1353.1px;top:441.6px;width:82.5px;text-align:center;font-size:10.5px;line-height:12px;font-weight:bold;color:#45463f;letter-spacing:-0.14px">25 / 25 shipped</div>
<div class="a" style="left:1261.8px;top:440px;width:82.3px;height:18px;box-sizing:border-box;border:1px solid #dad6d0;border-radius:3px;background:#f8f5f0"></div>
<div class="t" style="left:1261.8px;top:441.6px;width:82.3px;text-align:center;font-size:10.5px;line-height:12px;font-weight:bold;color:#93c54b;letter-spacing:-0.4px">WO in progress</div>
<div class="a" style="left:500px;top:467px;width:70px;height:25px;background:#f8f5f0"></div>
<svg style="position:absolute;left:507.9px;top:472.3px;width:14px;height:13.5px" viewBox="0 0 512 512" preserveAspectRatio="none"><path fill="#78a22f" d="M504.971 359.029c9.373 9.373 9.373 24.569 0 33.941l-80 79.984c-15.01 15.01-40.971 4.49-40.971-16.971V416h-58.785a12.004 12.004 0 0 1-8.773-3.812l-70.556-75.596 53.333-57.143L352 336h32v-39.981c0-21.438 25.943-31.998 40.971-16.971l80 79.981zM12 176h84l52.781 56.551 53.333-57.143-70.556-75.596A11.999 11.999 0 0 0 122.785 96H12c-6.627 0-12 5.373-12 12v56c0 6.627 5.373 12 12 12zm372 0v39.984c0 21.460 25.961 31.980 40.971 16.971l80-79.984c9.373-9.373 9.373-24.569 0-33.941l-80-79.981C409.943 24.021 384 34.582 384 56.019V96h-58.785a12.004 12.004 0 0 0-8.773 3.812L96 336H12c-6.627 0-12 5.373-12 12v56c0 6.627 5.373 12 12 12h110.785c3.326 0 6.503-1.381 8.773-3.812L352 176h32z"/></svg>
<div class="t" style="left:530px;top:469px;font-size:14px;line-height:20px;color:#44453f;font-weight:normal;letter-spacing:0px">P200</div>
<div class="t" style="left:574.5px;top:470px;font-size:11.2px;line-height:20px;color:#4a4b45;font-weight:normal;letter-spacing:0px">P200 Model Pump Assembly</div>
<div class="a" style="left:1353.1px;top:469px;width:82.5px;height:18px;box-sizing:border-box;border:1px solid #dad6d0;border-radius:3px;background:#fff"></div>
<div class="t" style="left:1353.1px;top:470.6px;width:82.5px;text-align:center;font-size:10.5px;line-height:12px;font-weight:bold;color:#45463f;letter-spacing:-0.14px">25 / 50 shipped</div>
<div class="a" style="left:1261.8px;top:469px;width:82.3px;height:18px;box-sizing:border-box;border:1px solid #dad6d0;border-radius:3px;background:#f8f5f0"></div>
<div class="t" style="left:1261.8px;top:470.6px;width:82.3px;text-align:center;font-size:10.5px;line-height:12px;font-weight:bold;color:#93c54b;letter-spacing:-0.4px">WO in progress</div>
<div class="a" style="left:500px;top:496px;width:70px;height:25px;background:#f8f5f0"></div>
<svg style="position:absolute;left:507.9px;top:501.3px;width:14px;height:13.5px" viewBox="0 0 512 512" preserveAspectRatio="none"><path fill="#78a22f" d="M504.971 359.029c9.373 9.373 9.373 24.569 0 33.941l-80 79.984c-15.01 15.01-40.971 4.49-40.971-16.971V416h-58.785a12.004 12.004 0 0 1-8.773-3.812l-70.556-75.596 53.333-57.143L352 336h32v-39.981c0-21.438 25.943-31.998 40.971-16.971l80 79.981zM12 176h84l52.781 56.551 53.333-57.143-70.556-75.596A11.999 11.999 0 0 0 122.785 96H12c-6.627 0-12 5.373-12 12v56c0 6.627 5.373 12 12 12zm372 0v39.984c0 21.460 25.961 31.980 40.971 16.971l80-79.984c9.373-9.373 9.373-24.569 0-33.941l-80-79.981C409.943 24.021 384 34.582 384 56.019V96h-58.785a12.004 12.004 0 0 0-8.773 3.812L96 336H12c-6.627 0-12 5.373-12 12v56c0 6.627 5.373 12 12 12h110.785c3.326 0 6.503-1.381 8.773-3.812L352 176h32z"/></svg>
<div class="t" style="left:530px;top:498px;font-size:14px;line-height:20px;color:#44453f;font-weight:normal;letter-spacing:0px">P200</div>
<div class="t" style="left:574.5px;top:499px;font-size:11.2px;line-height:20px;color:#4a4b45;font-weight:normal;letter-spacing:0px">P200 Model Pump Assembly</div>
<div class="a" style="left:1359.1px;top:498px;width:76.5px;height:18px;box-sizing:border-box;border:1px solid #dad6d0;border-radius:3px;background:#fff"></div>
<div class="t" style="left:1359.1px;top:499.6px;width:76.5px;text-align:center;font-size:10.5px;line-height:12px;font-weight:bold;color:#45463f;letter-spacing:-0.14px">0 / 30 shipped</div>
<div class="a" style="left:1268.1px;top:498px;width:82px;height:18px;box-sizing:border-box;border:1px solid #dad6d0;border-radius:3px;background:#f8f5f0"></div>
<div class="t" style="left:1268.1px;top:499.6px;width:82px;text-align:center;font-size:10.5px;line-height:12px;font-weight:bold;color:#8e8c84;letter-spacing:-0.4px">No WO planned</div>
<div class="a" style="left:40px;top:526px;width:1823px;height:1px;background:#dad6d0"></div>
<div class="a" style="left:49px;top:575.5px;width:78px;height:25px;background:#f8f5f0"></div>
<svg style="position:absolute;left:56.8px;top:580.5px;width:10.8px;height:14px" viewBox="0 0 384 512" preserveAspectRatio="none"><path fill="#78a22f" d="M377 105L279.1 7c-4.5-4.5-10.6-7-17-7H256v128h128v-6.1c0-6.3-2.5-12.4-7-16.9zm-153 31V0H24C10.7 0 0 10.7 0 24v464c0 13.3 10.7 24 24 24h336c13.3 0 24-10.7 24-24V160H248c-13.2 0-24-10.8-24-24zM64 72c0-4.42 3.58-8 8-8h80c4.42 0 8 3.58 8 8v16c0 4.42-3.580 8-8 8H72c-4.42 0-8-3.58-8-8V72zm0 80v-16c0-4.42 3.58-8 8-8h80c4.42 0 8 3.58 8 8v16c0 4.42-3.58 8-8 8H72c-4.42 0-8-3.58-8-8zm144 263.88V440c0 4.42-3.58 8-8 8h-16c-4.42 0-8-3.58-8-8v-24.29c-11.29-.58-22.27-4.52-31.37-11.35-3.9-2.93-4.1-8.77-.57-12.14l11.75-11.21c2.77-2.64 6.89-2.76 10.13-.73 3.87 2.42 8.26 3.72 12.82 3.720h28.11c6.5 0 11.8-5.92 11.8-13.19 0-5.95-3.61-11.19-8.77-12.73l-45-13.5c-18.59-5.58-31.58-23.42-31.58-43.39 0-24.52 19.05-44.44 42.67-45.07V232c0-4.42 3.58-8 8-8h16c4.42 0 8 3.58 8 8v24.29c11.29.58 22.27 4.51 31.37 11.35 3.9 2.93 4.1 8.77.57 12.14l-11.75 11.21c-2.77 2.64-6.89 2.76-10.13.73-3.87-2.43-8.26-3.72-12.82-3.72h-28.11c-6.5 0-11.8 5.92-11.8 13.19 0 5.95 3.61 11.19 8.77 12.73l45 13.5c18.59 5.58 31.58 23.42 31.58 43.39 0 24.53-19.05 44.44-42.67 45.07z"/></svg>
<div class="t" style="left:70.6px;top:577px;font-size:14px;line-height:20px;color:#76a040;font-weight:normal;letter-spacing:0.05px">S10015</div>
<div class="t" style="left:220.3px;top:578px;font-size:14px;line-height:20px;color:#44453f;font-weight:normal;letter-spacing:-0.12px">APL Example</div>
<div class="a" style="left:1725px;top:576.2px;width:132px;height:24px;background:#305c8a;border-radius:2.5px"></div>
<svg style="position:absolute;left:1733.9px;top:581.2px;width:14px;height:11px" viewBox="0 0 640 512" preserveAspectRatio="none"><path fill="#fff" d="M624 352h-16V243.9c0-12.7-5.1-24.9-14.1-33.9L494 110.1c-9-9-21.2-14.1-33.9-14.1H416V48c0-26.5-21.5-48-48-48H112C85.5 0 64 21.5 64 48v48H8c-4.4 0-8 3.6-8 8v16c0 4.4 3.6 8 8 8h272c4.4 0 8 3.6 8 8v16c0 4.4-3.6 8-8 8H40c-4.4 0-8 3.6-8 8v16c0 4.4 3.6 8 8 8h208c4.4 0 8 3.6 8 8v16c0 4.4-3.6 8-8 8H8c-4.4 0-8 3.6-8 8v16c0 4.4 3.6 8 8 8h208c4.4 0 8 3.6 8 8v16c0 4.4-3.6 8-8 8H64v128c0 53 43 96 96 96s96-43 96-96h128c0 53 43 96 96 96s96-43 96-96h48c8.8 0 16-7.2 16-16v-32c0-8.8-7.2-16-16-16zM160 464c-26.5 0-48-21.5-48-48s21.5-48 48-48 48 21.5 48 48-21.5 48-48 48zm320 0c-26.5 0-48-21.5-48-48s21.5-48 48-48 48 21.5 48 48-21.5 48-48 48zm80-208H416V144h44.1l99.9 99.9V256z"/></svg>
<div class="t" style="left:1750.3px;top:577px;font-size:11px;line-height:20px;color:#fff;font-weight:bold;letter-spacing:-0.5px">CREATE SHIPMENT</div>
<div class="a" style="left:500px;top:532px;width:90px;height:25px;background:#f8f5f0"></div>
<svg style="position:absolute;left:507.9px;top:537.3px;width:14px;height:13.5px" viewBox="0 0 512 512" preserveAspectRatio="none"><path fill="#78a22f" d="M504.971 359.029c9.373 9.373 9.373 24.569 0 33.941l-80 79.984c-15.01 15.01-40.971 4.49-40.971-16.971V416h-58.785a12.004 12.004 0 0 1-8.773-3.812l-70.556-75.596 53.333-57.143L352 336h32v-39.981c0-21.438 25.943-31.998 40.971-16.971l80 79.981zM12 176h84l52.781 56.551 53.333-57.143-70.556-75.596A11.999 11.999 0 0 0 122.785 96H12c-6.627 0-12 5.373-12 12v56c0 6.627 5.373 12 12 12zm372 0v39.984c0 21.460 25.961 31.980 40.971 16.971l80-79.984c9.373-9.373 9.373-24.569 0-33.941l-80-79.981C409.943 24.021 384 34.582 384 56.019V96h-58.785a12.004 12.004 0 0 0-8.773 3.812L96 336H12c-6.627 0-12 5.373-12 12v56c0 6.627 5.373 12 12 12h110.785c3.326 0 6.503-1.381 8.773-3.812L352 176h32z"/></svg>
<div class="t" style="left:530px;top:534px;font-size:14px;line-height:20px;color:#44453f;font-weight:normal;letter-spacing:-0.4px">AP45HR</div>
<div class="t" style="left:594.5px;top:535px;font-size:11.2px;line-height:20px;color:#4a4b45;font-weight:normal;letter-spacing:0px">Panel length 4.519m</div>
<div class="a" style="left:1353.1px;top:534px;width:82.5px;height:18px;box-sizing:border-box;border:1px solid #dad6d0;border-radius:3px;background:#fff"></div>
<div class="t" style="left:1353.1px;top:535.6px;width:82.5px;text-align:center;font-size:10.5px;line-height:12px;font-weight:bold;color:#45463f;letter-spacing:-0.14px">14 / 14 shipped</div>
<div class="a" style="left:1265.1px;top:534px;width:79px;height:18px;box-sizing:border-box;border:1px solid #dad6d0;border-radius:3px;background:#f8f5f0"></div>
<div class="t" style="left:1265.1px;top:535.6px;width:79px;text-align:center;font-size:10.5px;line-height:12px;font-weight:bold;color:#3b4d63;letter-spacing:-0.4px">WO completed</div>
<div class="a" style="left:500px;top:561px;width:274px;height:25px;background:#f8f5f0"></div>
<svg style="position:absolute;left:507.9px;top:566.3px;width:14px;height:13.5px" viewBox="0 0 512 512" preserveAspectRatio="none"><path fill="#78a22f" d="M504.971 359.029c9.373 9.373 9.373 24.569 0 33.941l-80 79.984c-15.01 15.01-40.971 4.49-40.971-16.971V416h-58.785a12.004 12.004 0 0 1-8.773-3.812l-70.556-75.596 53.333-57.143L352 336h32v-39.981c0-21.438 25.943-31.998 40.971-16.971l80 79.981zM12 176h84l52.781 56.551 53.333-57.143-70.556-75.596A11.999 11.999 0 0 0 122.785 96H12c-6.627 0-12 5.373-12 12v56c0 6.627 5.373 12 12 12zm372 0v39.984c0 21.460 25.961 31.980 40.971 16.971l80-79.984c9.373-9.373 9.373-24.569 0-33.941l-80-79.981C409.943 24.021 384 34.582 384 56.019V96h-58.785a12.004 12.004 0 0 0-8.773 3.812L96 336H12c-6.627 0-12 5.373-12 12v56c0 6.627 5.373 12 12 12h110.785c3.326 0 6.503-1.381 8.773-3.812L352 176h32z"/></svg>
<div class="t" style="left:530px;top:563px;font-size:14px;line-height:20px;color:#44453f;font-weight:normal;letter-spacing:-0.156px">S23 Panel - 0.9mm RAL 7035 AP45HR</div>
<div class="t" style="left:778.5px;top:564px;font-size:11.2px;line-height:20px;color:#4a4b45;font-weight:normal;letter-spacing:0px">Panel length 4.124m</div>
<div class="a" style="left:1365.1px;top:563px;width:70.5px;height:18px;box-sizing:border-box;border:1px solid #dad6d0;border-radius:3px;background:#fff"></div>
<div class="t" style="left:1365.1px;top:564.6px;width:70.5px;text-align:center;font-size:10.5px;line-height:12px;font-weight:bold;color:#45463f;letter-spacing:-0.14px">2 / 2 shipped</div>
<div class="a" style="left:1274.1px;top:563px;width:82px;height:18px;box-sizing:border-box;border:1px solid #dad6d0;border-radius:3px;background:#f8f5f0"></div>
<div class="t" style="left:1274.1px;top:564.6px;width:82px;text-align:center;font-size:10.5px;line-height:12px;font-weight:bold;color:#8e8c84;letter-spacing:-0.4px">No WO planned</div>
<div class="a" style="left:500px;top:590px;width:274px;height:25px;background:#f8f5f0"></div>
<svg style="position:absolute;left:507.9px;top:595.3px;width:14px;height:13.5px" viewBox="0 0 512 512" preserveAspectRatio="none"><path fill="#78a22f" d="M504.971 359.029c9.373 9.373 9.373 24.569 0 33.941l-80 79.984c-15.01 15.01-40.971 4.49-40.971-16.971V416h-58.785a12.004 12.004 0 0 1-8.773-3.812l-70.556-75.596 53.333-57.143L352 336h32v-39.981c0-21.438 25.943-31.998 40.971-16.971l80 79.981zM12 176h84l52.781 56.551 53.333-57.143-70.556-75.596A11.999 11.999 0 0 0 122.785 96H12c-6.627 0-12 5.373-12 12v56c0 6.627 5.373 12 12 12zm372 0v39.984c0 21.460 25.961 31.980 40.971 16.971l80-79.984c9.373-9.373 9.373-24.569 0-33.941l-80-79.981C409.943 24.021 384 34.582 384 56.019V96h-58.785a12.004 12.004 0 0 0-8.773 3.812L96 336H12c-6.627 0-12 5.373-12 12v56c0 6.627 5.373 12 12 12h110.785c3.326 0 6.503-1.381 8.773-3.812L352 176h32z"/></svg>
<div class="t" style="left:530px;top:592px;font-size:14px;line-height:20px;color:#44453f;font-weight:normal;letter-spacing:-0.156px">S24 Panel - 0.9mm RAL 7035 AP45HR</div>
<div class="t" style="left:778.5px;top:593px;font-size:11.2px;line-height:20px;color:#4a4b45;font-weight:normal;letter-spacing:0px">Panel length 4.474m</div>
<div class="a" style="left:1359.1px;top:592px;width:76.5px;height:18px;box-sizing:border-box;border:1px solid #dad6d0;border-radius:3px;background:#fff"></div>
<div class="t" style="left:1359.1px;top:593.6px;width:76.5px;text-align:center;font-size:10.5px;line-height:12px;font-weight:bold;color:#45463f;letter-spacing:-0.14px">4 / 16 shipped</div>
<div class="a" style="left:1268.1px;top:592px;width:82px;height:18px;box-sizing:border-box;border:1px solid #dad6d0;border-radius:3px;background:#f8f5f0"></div>
<div class="t" style="left:1268.1px;top:593.6px;width:82px;text-align:center;font-size:10.5px;line-height:12px;font-weight:bold;color:#8e8c84;letter-spacing:-0.4px">No WO planned</div>
<div class="a" style="left:500px;top:619px;width:274px;height:25px;background:#f8f5f0"></div>
<svg style="position:absolute;left:507.9px;top:624.3px;width:14px;height:13.5px" viewBox="0 0 512 512" preserveAspectRatio="none"><path fill="#78a22f" d="M504.971 359.029c9.373 9.373 9.373 24.569 0 33.941l-80 79.984c-15.01 15.01-40.971 4.49-40.971-16.971V416h-58.785a12.004 12.004 0 0 1-8.773-3.812l-70.556-75.596 53.333-57.143L352 336h32v-39.981c0-21.438 25.943-31.998 40.971-16.971l80 79.981zM12 176h84l52.781 56.551 53.333-57.143-70.556-75.596A11.999 11.999 0 0 0 122.785 96H12c-6.627 0-12 5.373-12 12v56c0 6.627 5.373 12 12 12zm372 0v39.984c0 21.460 25.961 31.980 40.971 16.971l80-79.984c9.373-9.373 9.373-24.569 0-33.941l-80-79.981C409.943 24.021 384 34.582 384 56.019V96h-58.785a12.004 12.004 0 0 0-8.773 3.812L96 336H12c-6.627 0-12 5.373-12 12v56c0 6.627 5.373 12 12 12h110.785c3.326 0 6.503-1.381 8.773-3.812L352 176h32z"/></svg>
<div class="t" style="left:530px;top:621px;font-size:14px;line-height:20px;color:#44453f;font-weight:normal;letter-spacing:-0.156px">S25 Panel - 0.9mm RAL 7035 AP45HR</div>
<div class="t" style="left:778.5px;top:622px;font-size:11.2px;line-height:20px;color:#4a4b45;font-weight:normal;letter-spacing:0px">Panel length 4.213m</div>
<div class="a" style="left:1359.1px;top:621px;width:76.5px;height:18px;box-sizing:border-box;border:1px solid #dad6d0;border-radius:3px;background:#fff"></div>
<div class="t" style="left:1359.1px;top:622.6px;width:76.5px;text-align:center;font-size:10.5px;line-height:12px;font-weight:bold;color:#45463f;letter-spacing:-0.14px">0 / 32 shipped</div>
<div class="a" style="left:1268.1px;top:621px;width:82px;height:18px;box-sizing:border-box;border:1px solid #dad6d0;border-radius:3px;background:#f8f5f0"></div>
<div class="t" style="left:1268.1px;top:622.6px;width:82px;text-align:center;font-size:10.5px;line-height:12px;font-weight:bold;color:#8e8c84;letter-spacing:-0.4px">No WO planned</div>
<div class="a" style="left:40px;top:649px;width:1823px;height:1px;background:#dad6d0"></div>
<div class="a" style="left:49px;top:655.0px;width:78px;height:25px;background:#f8f5f0"></div>
<svg style="position:absolute;left:56.8px;top:660.0px;width:10.8px;height:14px" viewBox="0 0 384 512" preserveAspectRatio="none"><path fill="#78a22f" d="M377 105L279.1 7c-4.5-4.5-10.6-7-17-7H256v128h128v-6.1c0-6.3-2.5-12.4-7-16.9zm-153 31V0H24C10.7 0 0 10.7 0 24v464c0 13.3 10.7 24 24 24h336c13.3 0 24-10.7 24-24V160H248c-13.2 0-24-10.8-24-24zM64 72c0-4.42 3.58-8 8-8h80c4.42 0 8 3.58 8 8v16c0 4.42-3.580 8-8 8H72c-4.42 0-8-3.58-8-8V72zm0 80v-16c0-4.42 3.58-8 8-8h80c4.42 0 8 3.58 8 8v16c0 4.42-3.58 8-8 8H72c-4.42 0-8-3.58-8-8zm144 263.88V440c0 4.42-3.58 8-8 8h-16c-4.42 0-8-3.58-8-8v-24.29c-11.29-.58-22.27-4.52-31.37-11.35-3.9-2.93-4.1-8.77-.57-12.14l11.75-11.21c2.77-2.64 6.89-2.76 10.13-.73 3.87 2.42 8.26 3.72 12.82 3.720h28.11c6.5 0 11.8-5.92 11.8-13.19 0-5.95-3.61-11.19-8.77-12.73l-45-13.5c-18.59-5.58-31.58-23.42-31.58-43.39 0-24.52 19.05-44.44 42.67-45.07V232c0-4.42 3.58-8 8-8h16c4.42 0 8 3.58 8 8v24.29c11.29.58 22.27 4.51 31.37 11.35 3.9 2.93 4.1 8.77.57 12.14l-11.75 11.21c-2.77 2.64-6.89 2.76-10.13.73-3.87-2.43-8.26-3.72-12.82-3.72h-28.11c-6.5 0-11.8 5.92-11.8 13.19 0 5.95 3.61 11.19 8.77 12.73l45 13.5c18.59 5.58 31.58 23.42 31.58 43.39 0 24.53-19.05 44.44-42.67 45.07z"/></svg>
<div class="t" style="left:70.6px;top:657px;font-size:14px;line-height:20px;color:#76a040;font-weight:normal;letter-spacing:0.05px">S10016</div>
<div class="t" style="left:220.3px;top:657px;font-size:14px;line-height:20px;color:#44453f;font-weight:normal;letter-spacing:-0.12px">Aerotech Group</div>
<div class="a" style="left:1725px;top:655.7px;width:132px;height:24px;background:#305c8a;border-radius:2.5px"></div>
<svg style="position:absolute;left:1733.9px;top:660.7px;width:14px;height:11px" viewBox="0 0 640 512" preserveAspectRatio="none"><path fill="#fff" d="M624 352h-16V243.9c0-12.7-5.1-24.9-14.1-33.9L494 110.1c-9-9-21.2-14.1-33.9-14.1H416V48c0-26.5-21.5-48-48-48H112C85.5 0 64 21.5 64 48v48H8c-4.4 0-8 3.6-8 8v16c0 4.4 3.6 8 8 8h272c4.4 0 8 3.6 8 8v16c0 4.4-3.6 8-8 8H40c-4.4 0-8 3.6-8 8v16c0 4.4 3.6 8 8 8h208c4.4 0 8 3.6 8 8v16c0 4.4-3.6 8-8 8H8c-4.4 0-8 3.6-8 8v16c0 4.4 3.6 8 8 8h208c4.4 0 8 3.6 8 8v16c0 4.4-3.6 8-8 8H64v128c0 53 43 96 96 96s96-43 96-96h128c0 53 43 96 96 96s96-43 96-96h48c8.8 0 16-7.2 16-16v-32c0-8.8-7.2-16-16-16zM160 464c-26.5 0-48-21.5-48-48s21.5-48 48-48 48 21.5 48 48-21.5 48-48 48zm320 0c-26.5 0-48-21.5-48-48s21.5-48 48-48 48 21.5 48 48-21.5 48-48 48zm80-208H416V144h44.1l99.9 99.9V256z"/></svg>
<div class="t" style="left:1750.3px;top:657px;font-size:11px;line-height:20px;color:#fff;font-weight:bold;letter-spacing:-0.5px">CREATE SHIPMENT</div>
<div class="a" style="left:500px;top:655px;width:70px;height:25px;background:#f8f5f0"></div>
<svg style="position:absolute;left:507.9px;top:660.3px;width:14px;height:13.5px" viewBox="0 0 512 512" preserveAspectRatio="none"><path fill="#78a22f" d="M504.971 359.029c9.373 9.373 9.373 24.569 0 33.941l-80 79.984c-15.01 15.01-40.971 4.49-40.971-16.971V416h-58.785a12.004 12.004 0 0 1-8.773-3.812l-70.556-75.596 53.333-57.143L352 336h32v-39.981c0-21.438 25.943-31.998 40.971-16.971l80 79.981zM12 176h84l52.781 56.551 53.333-57.143-70.556-75.596A11.999 11.999 0 0 0 122.785 96H12c-6.627 0-12 5.373-12 12v56c0 6.627 5.373 12 12 12zm372 0v39.984c0 21.460 25.961 31.980 40.971 16.971l80-79.984c9.373-9.373 9.373-24.569 0-33.941l-80-79.981C409.943 24.021 384 34.582 384 56.019V96h-58.785a12.004 12.004 0 0 0-8.773 3.812L96 336H12c-6.627 0-12 5.373-12 12v56c0 6.627 5.373 12 12 12h110.785c3.326 0 6.503-1.381 8.773-3.812L352 176h32z"/></svg>
<div class="t" style="left:530px;top:657px;font-size:14px;line-height:20px;color:#44453f;font-weight:normal;letter-spacing:0px">P200</div>
<div class="t" style="left:574.5px;top:658px;font-size:11.2px;line-height:20px;color:#4a4b45;font-weight:normal;letter-spacing:0px">P200 Model Pump Assembly</div>
<div class="a" style="left:1365.1px;top:657px;width:70.5px;height:18px;box-sizing:border-box;border:1px solid #dad6d0;border-radius:3px;background:#fff"></div>
<div class="t" style="left:1365.1px;top:658.6px;width:70.5px;text-align:center;font-size:10.5px;line-height:12px;font-weight:bold;color:#45463f;letter-spacing:-0.14px">5 / 5 shipped</div>
<div class="a" style="left:1277.1px;top:657px;width:79px;height:18px;box-sizing:border-box;border:1px solid #dad6d0;border-radius:3px;background:#f8f5f0"></div>
<div class="t" style="left:1277.1px;top:658.6px;width:79px;text-align:center;font-size:10.5px;line-height:12px;font-weight:bold;color:#3b4d63;letter-spacing:-0.4px">WO completed</div>
<div class="a" style="left:40px;top:685px;width:1823px;height:1px;background:#dad6d0"></div>
<div class="a" style="left:49px;top:691.5px;width:78px;height:25px;background:#f8f5f0"></div>
<svg style="position:absolute;left:56.8px;top:696.5px;width:10.8px;height:14px" viewBox="0 0 384 512" preserveAspectRatio="none"><path fill="#78a22f" d="M377 105L279.1 7c-4.5-4.5-10.6-7-17-7H256v128h128v-6.1c0-6.3-2.5-12.4-7-16.9zm-153 31V0H24C10.7 0 0 10.7 0 24v464c0 13.3 10.7 24 24 24h336c13.3 0 24-10.7 24-24V160H248c-13.2 0-24-10.8-24-24zM64 72c0-4.42 3.58-8 8-8h80c4.42 0 8 3.58 8 8v16c0 4.42-3.580 8-8 8H72c-4.42 0-8-3.58-8-8V72zm0 80v-16c0-4.42 3.58-8 8-8h80c4.42 0 8 3.58 8 8v16c0 4.42-3.58 8-8 8H72c-4.42 0-8-3.58-8-8zm144 263.88V440c0 4.42-3.58 8-8 8h-16c-4.42 0-8-3.58-8-8v-24.29c-11.29-.58-22.27-4.52-31.37-11.35-3.9-2.93-4.1-8.77-.57-12.14l11.75-11.21c2.77-2.64 6.89-2.76 10.13-.73 3.87 2.42 8.26 3.72 12.82 3.720h28.11c6.5 0 11.8-5.92 11.8-13.19 0-5.95-3.61-11.19-8.77-12.73l-45-13.5c-18.59-5.58-31.58-23.42-31.58-43.39 0-24.52 19.05-44.44 42.67-45.07V232c0-4.42 3.58-8 8-8h16c4.42 0 8 3.58 8 8v24.29c11.29.58 22.27 4.51 31.37 11.35 3.9 2.93 4.1 8.77.57 12.14l-11.75 11.21c-2.77 2.64-6.89 2.76-10.13.73-3.87-2.43-8.26-3.72-12.82-3.72h-28.11c-6.5 0-11.8 5.92-11.8 13.19 0 5.95 3.61 11.19 8.77 12.73l45 13.5c18.59 5.58 31.58 23.42 31.58 43.39 0 24.53-19.05 44.44-42.67 45.07z"/></svg>
<div class="t" style="left:70.6px;top:693px;font-size:14px;line-height:20px;color:#76a040;font-weight:normal;letter-spacing:0.05px">S10017</div>
<div class="t" style="left:220.3px;top:694px;font-size:14px;line-height:20px;color:#44453f;font-weight:normal;letter-spacing:-0.12px">Furniture Co. Ltd</div>
<div class="t" style="left:1445.5px;top:694px;font-size:14px;line-height:20px;color:#44453f;font-weight:normal;letter-spacing:0.42px">30/Oct/2020</div>
<div class="a" style="left:1725px;top:692.2px;width:132px;height:24px;background:#305c8a;border-radius:2.5px"></div>
<svg style="position:absolute;left:1733.9px;top:697.2px;width:14px;height:11px" viewBox="0 0 640 512" preserveAspectRatio="none"><path fill="#fff" d="M624 352h-16V243.9c0-12.7-5.1-24.9-14.1-33.9L494 110.1c-9-9-21.2-14.1-33.9-14.1H416V48c0-26.5-21.5-48-48-48H112C85.5 0 64 21.5 64 48v48H8c-4.4 0-8 3.6-8 8v16c0 4.4 3.6 8 8 8h272c4.4 0 8 3.6 8 8v16c0 4.4-3.6 8-8 8H40c-4.4 0-8 3.6-8 8v16c0 4.4 3.6 8 8 8h208c4.4 0 8 3.6 8 8v16c0 4.4-3.6 8-8 8H8c-4.4 0-8 3.6-8 8v16c0 4.4 3.6 8 8 8h208c4.4 0 8 3.6 8 8v16c0 4.4-3.6 8-8 8H64v128c0 53 43 96 96 96s96-43 96-96h128c0 53 43 96 96 96s96-43 96-96h48c8.8 0 16-7.2 16-16v-32c0-8.8-7.2-16-16-16zM160 464c-26.5 0-48-21.5-48-48s21.5-48 48-48 48 21.5 48 48-21.5 48-48 48zm320 0c-26.5 0-48-21.5-48-48s21.5-48 48-48 48 21.5 48 48-21.5 48-48 48zm80-208H416V144h44.1l99.9 99.9V256z"/></svg>
<div class="t" style="left:1750.3px;top:693px;font-size:11px;line-height:20px;color:#fff;font-weight:bold;letter-spacing:-0.5px">CREATE SHIPMENT</div>
<div class="a" style="left:500px;top:692px;width:90px;height:25px;background:#f8f5f0"></div>
<svg style="position:absolute;left:507.9px;top:697.3px;width:14px;height:13.5px" viewBox="0 0 512 512" preserveAspectRatio="none"><path fill="#78a22f" d="M504.971 359.029c9.373 9.373 9.373 24.569 0 33.941l-80 79.984c-15.01 15.01-40.971 4.49-40.971-16.971V416h-58.785a12.004 12.004 0 0 1-8.773-3.812l-70.556-75.596 53.333-57.143L352 336h32v-39.981c0-21.438 25.943-31.998 40.971-16.971l80 79.981zM12 176h84l52.781 56.551 53.333-57.143-70.556-75.596A11.999 11.999 0 0 0 122.785 96H12c-6.627 0-12 5.373-12 12v56c0 6.627 5.373 12 12 12zm372 0v39.984c0 21.460 25.961 31.980 40.971 16.971l80-79.984c9.373-9.373 9.373-24.569 0-33.941l-80-79.981C409.943 24.021 384 34.582 384 56.019V96h-58.785a12.004 12.004 0 0 0-8.773 3.812L96 336H12c-6.627 0-12 5.373-12 12v56c0 6.627 5.373 12 12 12h110.785c3.326 0 6.503-1.381 8.773-3.812L352 176h32z"/></svg>
<div class="t" style="left:530px;top:694px;font-size:14px;line-height:20px;color:#44453f;font-weight:normal;letter-spacing:-0.4px">AP45HR</div>
<div class="t" style="left:594.5px;top:695px;font-size:11.2px;line-height:20px;color:#4a4b45;font-weight:normal;letter-spacing:0px">Aluminium RAL 3456 S1 Type 4.135m</div>
<div class="a" style="left:1341.1px;top:694px;width:94.5px;height:18px;box-sizing:border-box;border:1px solid #dad6d0;border-radius:3px;background:#fff"></div>
<div class="t" style="left:1341.1px;top:695.6px;width:94.5px;text-align:center;font-size:10.5px;line-height:12px;font-weight:bold;color:#45463f;letter-spacing:-0.14px">100 / 100 shipped</div>
<div class="a" style="left:1253.1px;top:694px;width:79px;height:18px;box-sizing:border-box;border:1px solid #dad6d0;border-radius:3px;background:#f8f5f0"></div>
<div class="t" style="left:1253.1px;top:695.6px;width:79px;text-align:center;font-size:10.5px;line-height:12px;font-weight:bold;color:#3b4d63;letter-spacing:-0.4px">WO completed</div>
<div class="a" style="left:40px;top:722px;width:1823px;height:1px;background:#dad6d0"></div>
<div class="a" style="left:49px;top:742.5px;width:78px;height:25px;background:#f8f5f0"></div>
<svg style="position:absolute;left:56.8px;top:747.5px;width:10.8px;height:14px" viewBox="0 0 384 512" preserveAspectRatio="none"><path fill="#78a22f" d="M377 105L279.1 7c-4.5-4.5-10.6-7-17-7H256v128h128v-6.1c0-6.3-2.5-12.4-7-16.9zm-153 31V0H24C10.7 0 0 10.7 0 24v464c0 13.3 10.7 24 24 24h336c13.3 0 24-10.7 24-24V160H248c-13.2 0-24-10.8-24-24zM64 72c0-4.42 3.58-8 8-8h80c4.42 0 8 3.58 8 8v16c0 4.42-3.580 8-8 8H72c-4.42 0-8-3.58-8-8V72zm0 80v-16c0-4.42 3.58-8 8-8h80c4.42 0 8 3.58 8 8v16c0 4.42-3.58 8-8 8H72c-4.42 0-8-3.58-8-8zm144 263.88V440c0 4.42-3.58 8-8 8h-16c-4.42 0-8-3.58-8-8v-24.29c-11.29-.58-22.27-4.52-31.37-11.35-3.9-2.93-4.1-8.77-.57-12.14l11.75-11.21c2.77-2.64 6.89-2.76 10.13-.73 3.87 2.42 8.26 3.72 12.82 3.720h28.11c6.5 0 11.8-5.92 11.8-13.19 0-5.95-3.61-11.19-8.77-12.73l-45-13.5c-18.59-5.58-31.58-23.42-31.58-43.39 0-24.52 19.05-44.44 42.67-45.07V232c0-4.42 3.58-8 8-8h16c4.42 0 8 3.58 8 8v24.29c11.29.58 22.27 4.51 31.37 11.35 3.9 2.93 4.1 8.77.57 12.14l-11.75 11.21c-2.77 2.64-6.89 2.76-10.13.73-3.87-2.43-8.26-3.72-12.82-3.72h-28.11c-6.5 0-11.8 5.92-11.8 13.19 0 5.95 3.61 11.19 8.77 12.73l45 13.5c18.59 5.58 31.58 23.42 31.58 43.39 0 24.53-19.05 44.44-42.67 45.07z"/></svg>
<div class="t" style="left:70.6px;top:744px;font-size:14px;line-height:20px;color:#76a040;font-weight:normal;letter-spacing:0.05px">S10137</div>
<div class="t" style="left:220.3px;top:745px;font-size:14px;line-height:20px;color:#44453f;font-weight:normal;letter-spacing:-0.12px">Aerotech Group</div>
<div class="t" style="left:1445.5px;top:745px;font-size:14px;line-height:20px;color:#44453f;font-weight:normal;letter-spacing:0.42px">29/Jul/2022</div>
<div class="a" style="left:1725px;top:743.2px;width:132px;height:24px;background:#305c8a;border-radius:2.5px"></div>
<svg style="position:absolute;left:1733.9px;top:748.2px;width:14px;height:11px" viewBox="0 0 640 512" preserveAspectRatio="none"><path fill="#fff" d="M624 352h-16V243.9c0-12.7-5.1-24.9-14.1-33.9L494 110.1c-9-9-21.2-14.1-33.9-14.1H416V48c0-26.5-21.5-48-48-48H112C85.5 0 64 21.5 64 48v48H8c-4.4 0-8 3.6-8 8v16c0 4.4 3.6 8 8 8h272c4.4 0 8 3.6 8 8v16c0 4.4-3.6 8-8 8H40c-4.4 0-8 3.6-8 8v16c0 4.4 3.6 8 8 8h208c4.4 0 8 3.6 8 8v16c0 4.4-3.6 8-8 8H8c-4.4 0-8 3.6-8 8v16c0 4.4 3.6 8 8 8h208c4.4 0 8 3.6 8 8v16c0 4.4-3.6 8-8 8H64v128c0 53 43 96 96 96s96-43 96-96h128c0 53 43 96 96 96s96-43 96-96h48c8.8 0 16-7.2 16-16v-32c0-8.8-7.2-16-16-16zM160 464c-26.5 0-48-21.5-48-48s21.5-48 48-48 48 21.5 48 48-21.5 48-48 48zm320 0c-26.5 0-48-21.5-48-48s21.5-48 48-48 48 21.5 48 48-21.5 48-48 48zm80-208H416V144h44.1l99.9 99.9V256z"/></svg>
<div class="t" style="left:1750.3px;top:744px;font-size:11px;line-height:20px;color:#fff;font-weight:bold;letter-spacing:-0.5px">CREATE SHIPMENT</div>
<div class="a" style="left:500px;top:728px;width:274px;height:25px;background:#f8f5f0"></div>
<svg style="position:absolute;left:507.9px;top:733.3px;width:14px;height:13.5px" viewBox="0 0 512 512" preserveAspectRatio="none"><path fill="#78a22f" d="M504.971 359.029c9.373 9.373 9.373 24.569 0 33.941l-80 79.984c-15.01 15.01-40.971 4.49-40.971-16.971V416h-58.785a12.004 12.004 0 0 1-8.773-3.812l-70.556-75.596 53.333-57.143L352 336h32v-39.981c0-21.438 25.943-31.998 40.971-16.971l80 79.981zM12 176h84l52.781 56.551 53.333-57.143-70.556-75.596A11.999 11.999 0 0 0 122.785 96H12c-6.627 0-12 5.373-12 12v56c0 6.627 5.373 12 12 12zm372 0v39.984c0 21.460 25.961 31.980 40.971 16.971l80-79.984c9.373-9.373 9.373-24.569 0-33.941l-80-79.981C409.943 24.021 384 34.582 384 56.019V96h-58.785a12.004 12.004 0 0 0-8.773 3.812L96 336H12c-6.627 0-12 5.373-12 12v56c0 6.627 5.373 12 12 12h110.785c3.326 0 6.503-1.381 8.773-3.812L352 176h32z"/></svg>
<div class="t" style="left:530px;top:730px;font-size:14px;line-height:20px;color:#44453f;font-weight:normal;letter-spacing:-0.156px">S23 Panel - 0.9mm RAL 7035 AP45HR</div>
<div class="t" style="left:778.5px;top:731px;font-size:11.2px;line-height:20px;color:#4a4b45;font-weight:normal;letter-spacing:0px">Panel length 4.124m</div>
<div class="a" style="left:1365.1px;top:730px;width:70.5px;height:18px;box-sizing:border-box;border:1px solid #dad6d0;border-radius:3px;background:#fff"></div>
<div class="t" style="left:1365.1px;top:731.6px;width:70.5px;text-align:center;font-size:10.5px;line-height:12px;font-weight:bold;color:#45463f;letter-spacing:-0.14px">0 / 3 shipped</div>
<div class="a" style="left:1274.1px;top:730px;width:82px;height:18px;box-sizing:border-box;border:1px solid #dad6d0;border-radius:3px;background:#f8f5f0"></div>
<div class="t" style="left:1274.1px;top:731.6px;width:82px;text-align:center;font-size:10.5px;line-height:12px;font-weight:bold;color:#8e8c84;letter-spacing:-0.4px">No WO planned</div>
<div class="a" style="left:500px;top:757px;width:70px;height:25px;background:#f8f5f0"></div>
<svg style="position:absolute;left:507.9px;top:762.3px;width:14px;height:13.5px" viewBox="0 0 512 512" preserveAspectRatio="none"><path fill="#78a22f" d="M504.971 359.029c9.373 9.373 9.373 24.569 0 33.941l-80 79.984c-15.01 15.01-40.971 4.49-40.971-16.971V416h-58.785a12.004 12.004 0 0 1-8.773-3.812l-70.556-75.596 53.333-57.143L352 336h32v-39.981c0-21.438 25.943-31.998 40.971-16.971l80 79.981zM12 176h84l52.781 56.551 53.333-57.143-70.556-75.596A11.999 11.999 0 0 0 122.785 96H12c-6.627 0-12 5.373-12 12v56c0 6.627 5.373 12 12 12zm372 0v39.984c0 21.460 25.961 31.980 40.971 16.971l80-79.984c9.373-9.373 9.373-24.569 0-33.941l-80-79.981C409.943 24.021 384 34.582 384 56.019V96h-58.785a12.004 12.004 0 0 0-8.773 3.812L96 336H12c-6.627 0-12 5.373-12 12v56c0 6.627 5.373 12 12 12h110.785c3.326 0 6.503-1.381 8.773-3.812L352 176h32z"/></svg>
<div class="t" style="left:530px;top:759px;font-size:14px;line-height:20px;color:#44453f;font-weight:normal;letter-spacing:0px">P200</div>
<div class="t" style="left:574.5px;top:760px;font-size:11.2px;line-height:20px;color:#4a4b45;font-weight:normal;letter-spacing:0px">P200 Model Pump Assembly</div>
<div class="a" style="left:1365.1px;top:759px;width:70.5px;height:18px;box-sizing:border-box;border:1px solid #dad6d0;border-radius:3px;background:#fff"></div>
<div class="t" style="left:1365.1px;top:760.6px;width:70.5px;text-align:center;font-size:10.5px;line-height:12px;font-weight:bold;color:#45463f;letter-spacing:-0.14px">0 / 6 shipped</div>
<div class="a" style="left:1273.8px;top:759px;width:82.3px;height:18px;box-sizing:border-box;border:1px solid #dad6d0;border-radius:3px;background:#f8f5f0"></div>
<div class="t" style="left:1273.8px;top:760.6px;width:82.3px;text-align:center;font-size:10.5px;line-height:12px;font-weight:bold;color:#93c54b;letter-spacing:-0.4px">WO in progress</div>
<div class="a" style="left:40px;top:787px;width:1823px;height:1px;background:#dad6d0"></div>
<div class="a" style="left:49px;top:793.5px;width:78px;height:25px;background:#f8f5f0"></div>
<svg style="position:absolute;left:56.8px;top:798.5px;width:10.8px;height:14px" viewBox="0 0 384 512" preserveAspectRatio="none"><path fill="#78a22f" d="M377 105L279.1 7c-4.5-4.5-10.6-7-17-7H256v128h128v-6.1c0-6.3-2.5-12.4-7-16.9zm-153 31V0H24C10.7 0 0 10.7 0 24v464c0 13.3 10.7 24 24 24h336c13.3 0 24-10.7 24-24V160H248c-13.2 0-24-10.8-24-24zM64 72c0-4.42 3.58-8 8-8h80c4.42 0 8 3.58 8 8v16c0 4.42-3.580 8-8 8H72c-4.42 0-8-3.58-8-8V72zm0 80v-16c0-4.42 3.58-8 8-8h80c4.42 0 8 3.58 8 8v16c0 4.42-3.58 8-8 8H72c-4.42 0-8-3.58-8-8zm144 263.88V440c0 4.42-3.58 8-8 8h-16c-4.42 0-8-3.58-8-8v-24.29c-11.29-.58-22.27-4.52-31.37-11.35-3.9-2.93-4.1-8.77-.57-12.14l11.75-11.21c2.77-2.64 6.89-2.76 10.13-.73 3.87 2.42 8.26 3.72 12.82 3.720h28.11c6.5 0 11.8-5.92 11.8-13.19 0-5.95-3.61-11.19-8.77-12.73l-45-13.5c-18.59-5.58-31.58-23.42-31.58-43.39 0-24.52 19.05-44.44 42.67-45.07V232c0-4.42 3.58-8 8-8h16c4.42 0 8 3.58 8 8v24.29c11.29.58 22.27 4.51 31.37 11.35 3.9 2.93 4.1 8.77.57 12.14l-11.75 11.21c-2.77 2.64-6.89 2.76-10.13.73-3.87-2.43-8.26-3.72-12.82-3.72h-28.11c-6.5 0-11.8 5.92-11.8 13.19 0 5.95 3.61 11.19 8.77 12.73l45 13.5c18.59 5.58 31.58 23.42 31.58 43.39 0 24.53-19.05 44.44-42.67 45.07z"/></svg>
<div class="t" style="left:70.6px;top:795px;font-size:14px;line-height:20px;color:#76a040;font-weight:normal;letter-spacing:0.05px">S10018</div>
<div class="t" style="left:220.3px;top:796px;font-size:14px;line-height:20px;color:#44453f;font-weight:normal;letter-spacing:-0.12px">Furniture Co. Ltd</div>
<div class="a" style="left:1725px;top:794.2px;width:132px;height:24px;background:#305c8a;border-radius:2.5px"></div>
<svg style="position:absolute;left:1733.9px;top:799.2px;width:14px;height:11px" viewBox="0 0 640 512" preserveAspectRatio="none"><path fill="#fff" d="M624 352h-16V243.9c0-12.7-5.1-24.9-14.1-33.9L494 110.1c-9-9-21.2-14.1-33.9-14.1H416V48c0-26.5-21.5-48-48-48H112C85.5 0 64 21.5 64 48v48H8c-4.4 0-8 3.6-8 8v16c0 4.4 3.6 8 8 8h272c4.4 0 8 3.6 8 8v16c0 4.4-3.6 8-8 8H40c-4.4 0-8 3.6-8 8v16c0 4.4 3.6 8 8 8h208c4.4 0 8 3.6 8 8v16c0 4.4-3.6 8-8 8H8c-4.4 0-8 3.6-8 8v16c0 4.4 3.6 8 8 8h208c4.4 0 8 3.6 8 8v16c0 4.4-3.6 8-8 8H64v128c0 53 43 96 96 96s96-43 96-96h128c0 53 43 96 96 96s96-43 96-96h48c8.8 0 16-7.2 16-16v-32c0-8.8-7.2-16-16-16zM160 464c-26.5 0-48-21.5-48-48s21.5-48 48-48 48 21.5 48 48-21.5 48-48 48zm320 0c-26.5 0-48-21.5-48-48s21.5-48 48-48 48 21.5 48 48-21.5 48-48 48zm80-208H416V144h44.1l99.9 99.9V256z"/></svg>
<div class="t" style="left:1750.3px;top:795px;font-size:11px;line-height:20px;color:#fff;font-weight:bold;letter-spacing:-0.5px">CREATE SHIPMENT</div>
<div class="a" style="left:500px;top:793px;width:70px;height:25px;background:#f8f5f0"></div>
<svg style="position:absolute;left:507.9px;top:798.3px;width:14px;height:13.5px" viewBox="0 0 512 512" preserveAspectRatio="none"><path fill="#78a22f" d="M504.971 359.029c9.373 9.373 9.373 24.569 0 33.941l-80 79.984c-15.01 15.01-40.971 4.49-40.971-16.971V416h-58.785a12.004 12.004 0 0 1-8.773-3.812l-70.556-75.596 53.333-57.143L352 336h32v-39.981c0-21.438 25.943-31.998 40.971-16.971l80 79.981zM12 176h84l52.781 56.551 53.333-57.143-70.556-75.596A11.999 11.999 0 0 0 122.785 96H12c-6.627 0-12 5.373-12 12v56c0 6.627 5.373 12 12 12zm372 0v39.984c0 21.460 25.961 31.980 40.971 16.971l80-79.984c9.373-9.373 9.373-24.569 0-33.941l-80-79.981C409.943 24.021 384 34.582 384 56.019V96h-58.785a12.004 12.004 0 0 0-8.773 3.812L96 336H12c-6.627 0-12 5.373-12 12v56c0 6.627 5.373 12 12 12h110.785c3.326 0 6.503-1.381 8.773-3.812L352 176h32z"/></svg>
<div class="t" style="left:530px;top:795px;font-size:14px;line-height:20px;color:#44453f;font-weight:normal;letter-spacing:0px">P200</div>
<div class="t" style="left:574.5px;top:796px;font-size:11.2px;line-height:20px;color:#4a4b45;font-weight:normal;letter-spacing:0px">P200 Model Pump Assembly</div>
<div class="a" style="left:1359.1px;top:795px;width:76.5px;height:18px;box-sizing:border-box;border:1px solid #dad6d0;border-radius:3px;background:#fff"></div>
<div class="t" style="left:1359.1px;top:796.6px;width:76.5px;text-align:center;font-size:10.5px;line-height:12px;font-weight:bold;color:#45463f;letter-spacing:-0.14px">0 / 10 shipped</div>
<div class="a" style="left:1267.8px;top:795px;width:82.3px;height:18px;box-sizing:border-box;border:1px solid #dad6d0;border-radius:3px;background:#f8f5f0"></div>
<div class="t" style="left:1267.8px;top:796.6px;width:82.3px;text-align:center;font-size:10.5px;line-height:12px;font-weight:bold;color:#93c54b;letter-spacing:-0.4px">WO in progress</div>
<div class="a" style="left:40px;top:824px;width:1823px;height:1px;background:#dad6d0"></div>
<div class="a" style="left:49px;top:830.0px;width:78px;height:25px;background:#f8f5f0"></div>
<svg style="position:absolute;left:56.8px;top:835.0px;width:10.8px;height:14px" viewBox="0 0 384 512" preserveAspectRatio="none"><path fill="#78a22f" d="M377 105L279.1 7c-4.5-4.5-10.6-7-17-7H256v128h128v-6.1c0-6.3-2.5-12.4-7-16.9zm-153 31V0H24C10.7 0 0 10.7 0 24v464c0 13.3 10.7 24 24 24h336c13.3 0 24-10.7 24-24V160H248c-13.2 0-24-10.8-24-24zM64 72c0-4.42 3.58-8 8-8h80c4.42 0 8 3.58 8 8v16c0 4.42-3.580 8-8 8H72c-4.42 0-8-3.58-8-8V72zm0 80v-16c0-4.42 3.58-8 8-8h80c4.42 0 8 3.58 8 8v16c0 4.42-3.58 8-8 8H72c-4.42 0-8-3.58-8-8zm144 263.88V440c0 4.42-3.58 8-8 8h-16c-4.42 0-8-3.58-8-8v-24.29c-11.29-.58-22.27-4.52-31.37-11.35-3.9-2.93-4.1-8.77-.57-12.14l11.75-11.21c2.77-2.64 6.89-2.76 10.13-.73 3.87 2.42 8.26 3.72 12.82 3.720h28.11c6.5 0 11.8-5.92 11.8-13.19 0-5.95-3.61-11.19-8.77-12.73l-45-13.5c-18.59-5.58-31.58-23.42-31.58-43.39 0-24.52 19.05-44.44 42.67-45.07V232c0-4.42 3.58-8 8-8h16c4.42 0 8 3.58 8 8v24.29c11.29.58 22.27 4.51 31.37 11.35 3.9 2.93 4.1 8.77.57 12.14l-11.75 11.21c-2.77 2.64-6.89 2.76-10.13.73-3.87-2.43-8.26-3.72-12.82-3.72h-28.11c-6.5 0-11.8 5.92-11.8 13.19 0 5.95 3.61 11.19 8.77 12.73l45 13.5c18.59 5.58 31.58 23.42 31.58 43.39 0 24.53-19.05 44.44-42.67 45.07z"/></svg>
<div class="t" style="left:70.6px;top:832px;font-size:14px;line-height:20px;color:#76a040;font-weight:normal;letter-spacing:0.05px">S10071</div>
<div class="t" style="left:220.3px;top:832px;font-size:14px;line-height:20px;color:#44453f;font-weight:normal;letter-spacing:-0.12px">Aerotech Group</div>
<div class="a" style="left:1725px;top:830.7px;width:132px;height:24px;background:#305c8a;border-radius:2.5px"></div>
<svg style="position:absolute;left:1733.9px;top:835.7px;width:14px;height:11px" viewBox="0 0 640 512" preserveAspectRatio="none"><path fill="#fff" d="M624 352h-16V243.9c0-12.7-5.1-24.9-14.1-33.9L494 110.1c-9-9-21.2-14.1-33.9-14.1H416V48c0-26.5-21.5-48-48-48H112C85.5 0 64 21.5 64 48v48H8c-4.4 0-8 3.6-8 8v16c0 4.4 3.6 8 8 8h272c4.4 0 8 3.6 8 8v16c0 4.4-3.6 8-8 8H40c-4.4 0-8 3.6-8 8v16c0 4.4 3.6 8 8 8h208c4.4 0 8 3.6 8 8v16c0 4.4-3.6 8-8 8H8c-4.4 0-8 3.6-8 8v16c0 4.4 3.6 8 8 8h208c4.4 0 8 3.6 8 8v16c0 4.4-3.6 8-8 8H64v128c0 53 43 96 96 96s96-43 96-96h128c0 53 43 96 96 96s96-43 96-96h48c8.8 0 16-7.2 16-16v-32c0-8.8-7.2-16-16-16zM160 464c-26.5 0-48-21.5-48-48s21.5-48 48-48 48 21.5 48 48-21.5 48-48 48zm320 0c-26.5 0-48-21.5-48-48s21.5-48 48-48 48 21.5 48 48-21.5 48-48 48zm80-208H416V144h44.1l99.9 99.9V256z"/></svg>
<div class="t" style="left:1750.3px;top:832px;font-size:11px;line-height:20px;color:#fff;font-weight:bold;letter-spacing:-0.5px">CREATE SHIPMENT</div>
<div class="a" style="left:500px;top:830px;width:70px;height:25px;background:#f8f5f0"></div>
<svg style="position:absolute;left:507.9px;top:835.3px;width:14px;height:13.5px" viewBox="0 0 512 512" preserveAspectRatio="none"><path fill="#78a22f" d="M504.971 359.029c9.373 9.373 9.373 24.569 0 33.941l-80 79.984c-15.01 15.01-40.971 4.49-40.971-16.971V416h-58.785a12.004 12.004 0 0 1-8.773-3.812l-70.556-75.596 53.333-57.143L352 336h32v-39.981c0-21.438 25.943-31.998 40.971-16.971l80 79.981zM12 176h84l52.781 56.551 53.333-57.143-70.556-75.596A11.999 11.999 0 0 0 122.785 96H12c-6.627 0-12 5.373-12 12v56c0 6.627 5.373 12 12 12zm372 0v39.984c0 21.460 25.961 31.980 40.971 16.971l80-79.984c9.373-9.373 9.373-24.569 0-33.941l-80-79.981C409.943 24.021 384 34.582 384 56.019V96h-58.785a12.004 12.004 0 0 0-8.773 3.812L96 336H12c-6.627 0-12 5.373-12 12v56c0 6.627 5.373 12 12 12h110.785c3.326 0 6.503-1.381 8.773-3.812L352 176h32z"/></svg>
<div class="t" style="left:530px;top:832px;font-size:14px;line-height:20px;color:#44453f;font-weight:normal;letter-spacing:0px">P200</div>
<div class="t" style="left:574.5px;top:833px;font-size:11.2px;line-height:20px;color:#4a4b45;font-weight:normal;letter-spacing:0px">P200 Model Pump Assembly Painted Yellow</div>
<div class="a" style="left:1365.1px;top:832px;width:70.5px;height:18px;box-sizing:border-box;border:1px solid #dad6d0;border-radius:3px;background:#fff"></div>
<div class="t" style="left:1365.1px;top:833.6px;width:70.5px;text-align:center;font-size:10.5px;line-height:12px;font-weight:bold;color:#45463f;letter-spacing:-0.14px">0 / 2 shipped</div>
<div class="a" style="left:1274.1px;top:832px;width:82px;height:18px;box-sizing:border-box;border:1px solid #dad6d0;border-radius:3px;background:#f8f5f0"></div>
<div class="t" style="left:1274.1px;top:833.6px;width:82px;text-align:center;font-size:10.5px;line-height:12px;font-weight:bold;color:#8e8c84;letter-spacing:-0.4px">No WO planned</div>
<div class="a" style="left:40px;top:860px;width:1823px;height:1px;background:#dad6d0"></div>
<div class="a" style="left:49px;top:898.0px;width:78px;height:25px;background:#f8f5f0"></div>
<svg style="position:absolute;left:56.8px;top:903.0px;width:10.8px;height:14px" viewBox="0 0 384 512" preserveAspectRatio="none"><path fill="#78a22f" d="M377 105L279.1 7c-4.5-4.5-10.6-7-17-7H256v128h128v-6.1c0-6.3-2.5-12.4-7-16.9zm-153 31V0H24C10.7 0 0 10.7 0 24v464c0 13.3 10.7 24 24 24h336c13.3 0 24-10.7 24-24V160H248c-13.2 0-24-10.8-24-24zM64 72c0-4.42 3.58-8 8-8h80c4.42 0 8 3.58 8 8v16c0 4.42-3.580 8-8 8H72c-4.42 0-8-3.58-8-8V72zm0 80v-16c0-4.42 3.58-8 8-8h80c4.42 0 8 3.58 8 8v16c0 4.42-3.58 8-8 8H72c-4.42 0-8-3.58-8-8zm144 263.88V440c0 4.42-3.58 8-8 8h-16c-4.42 0-8-3.58-8-8v-24.29c-11.29-.58-22.27-4.52-31.37-11.35-3.9-2.93-4.1-8.77-.57-12.14l11.75-11.21c2.77-2.64 6.89-2.76 10.13-.73 3.87 2.42 8.26 3.72 12.82 3.720h28.11c6.5 0 11.8-5.92 11.8-13.19 0-5.95-3.61-11.19-8.77-12.73l-45-13.5c-18.59-5.58-31.58-23.42-31.58-43.39 0-24.52 19.05-44.44 42.67-45.07V232c0-4.42 3.58-8 8-8h16c4.42 0 8 3.58 8 8v24.29c11.29.58 22.27 4.51 31.37 11.35 3.9 2.93 4.1 8.77.57 12.14l-11.75 11.21c-2.77 2.64-6.89 2.76-10.13.73-3.87-2.43-8.26-3.72-12.82-3.72h-28.11c-6.5 0-11.8 5.92-11.8 13.19 0 5.95 3.61 11.19 8.77 12.73l45 13.5c18.59 5.58 31.58 23.42 31.58 43.39 0 24.53-19.05 44.44-42.67 45.07z"/></svg>
<div class="t" style="left:70.6px;top:900px;font-size:14px;line-height:20px;color:#76a040;font-weight:normal;letter-spacing:0.05px">S10020</div>
<div class="t" style="left:220.3px;top:900px;font-size:14px;line-height:20px;color:#44453f;font-weight:normal;letter-spacing:-0.12px">Aerotech Group</div>
<div class="a" style="left:1725px;top:898.7px;width:132px;height:24px;background:#305c8a;border-radius:2.5px"></div>
<svg style="position:absolute;left:1733.9px;top:903.7px;width:14px;height:11px" viewBox="0 0 640 512" preserveAspectRatio="none"><path fill="#fff" d="M624 352h-16V243.9c0-12.7-5.1-24.9-14.1-33.9L494 110.1c-9-9-21.2-14.1-33.9-14.1H416V48c0-26.5-21.5-48-48-48H112C85.5 0 64 21.5 64 48v48H8c-4.4 0-8 3.6-8 8v16c0 4.4 3.6 8 8 8h272c4.4 0 8 3.6 8 8v16c0 4.4-3.6 8-8 8H40c-4.4 0-8 3.6-8 8v16c0 4.4 3.6 8 8 8h208c4.4 0 8 3.6 8 8v16c0 4.4-3.6 8-8 8H8c-4.4 0-8 3.6-8 8v16c0 4.4 3.6 8 8 8h208c4.4 0 8 3.6 8 8v16c0 4.4-3.6 8-8 8H64v128c0 53 43 96 96 96s96-43 96-96h128c0 53 43 96 96 96s96-43 96-96h48c8.8 0 16-7.2 16-16v-32c0-8.8-7.2-16-16-16zM160 464c-26.5 0-48-21.5-48-48s21.5-48 48-48 48 21.5 48 48-21.5 48-48 48zm320 0c-26.5 0-48-21.5-48-48s21.5-48 48-48 48 21.5 48 48-21.5 48-48 48zm80-208H416V144h44.1l99.9 99.9V256z"/></svg>
<div class="t" style="left:1750.3px;top:900px;font-size:11px;line-height:20px;color:#fff;font-weight:bold;letter-spacing:-0.5px">CREATE SHIPMENT</div>
<div class="a" style="left:500px;top:866px;width:274px;height:25px;background:#f8f5f0"></div>
<svg style="position:absolute;left:507.9px;top:871.3px;width:14px;height:13.5px" viewBox="0 0 512 512" preserveAspectRatio="none"><path fill="#78a22f" d="M504.971 359.029c9.373 9.373 9.373 24.569 0 33.941l-80 79.984c-15.01 15.01-40.971 4.49-40.971-16.971V416h-58.785a12.004 12.004 0 0 1-8.773-3.812l-70.556-75.596 53.333-57.143L352 336h32v-39.981c0-21.438 25.943-31.998 40.971-16.971l80 79.981zM12 176h84l52.781 56.551 53.333-57.143-70.556-75.596A11.999 11.999 0 0 0 122.785 96H12c-6.627 0-12 5.373-12 12v56c0 6.627 5.373 12 12 12zm372 0v39.984c0 21.460 25.961 31.980 40.971 16.971l80-79.984c9.373-9.373 9.373-24.569 0-33.941l-80-79.981C409.943 24.021 384 34.582 384 56.019V96h-58.785a12.004 12.004 0 0 0-8.773 3.812L96 336H12c-6.627 0-12 5.373-12 12v56c0 6.627 5.373 12 12 12h110.785c3.326 0 6.503-1.381 8.773-3.812L352 176h32z"/></svg>
<div class="t" style="left:530px;top:868px;font-size:14px;line-height:20px;color:#44453f;font-weight:normal;letter-spacing:-0.156px">S23 Panel - 0.9mm RAL 7035 AP45HR</div>
<div class="t" style="left:778.5px;top:869px;font-size:11.2px;line-height:20px;color:#4a4b45;font-weight:normal;letter-spacing:0px">Panel length 4.124m</div>
<div class="a" style="left:1359.1px;top:868px;width:76.5px;height:18px;box-sizing:border-box;border:1px solid #dad6d0;border-radius:3px;background:#fff"></div>
<div class="t" style="left:1359.1px;top:869.6px;width:76.5px;text-align:center;font-size:10.5px;line-height:12px;font-weight:bold;color:#45463f;letter-spacing:-0.14px">0 / 10 shipped</div>
<div class="a" style="left:1267.8px;top:868px;width:82.3px;height:18px;box-sizing:border-box;border:1px solid #dad6d0;border-radius:3px;background:#f8f5f0"></div>
<div class="t" style="left:1267.8px;top:869.6px;width:82.3px;text-align:center;font-size:10.5px;line-height:12px;font-weight:bold;color:#93c54b;letter-spacing:-0.4px">WO in progress</div>
<div class="a" style="left:500px;top:895px;width:70px;height:25px;background:#f8f5f0"></div>
<svg style="position:absolute;left:507.9px;top:900.3px;width:14px;height:13.5px" viewBox="0 0 512 512" preserveAspectRatio="none"><path fill="#78a22f" d="M504.971 359.029c9.373 9.373 9.373 24.569 0 33.941l-80 79.984c-15.01 15.01-40.971 4.49-40.971-16.971V416h-58.785a12.004 12.004 0 0 1-8.773-3.812l-70.556-75.596 53.333-57.143L352 336h32v-39.981c0-21.438 25.943-31.998 40.971-16.971l80 79.981zM12 176h84l52.781 56.551 53.333-57.143-70.556-75.596A11.999 11.999 0 0 0 122.785 96H12c-6.627 0-12 5.373-12 12v56c0 6.627 5.373 12 12 12zm372 0v39.984c0 21.460 25.961 31.980 40.971 16.971l80-79.984c9.373-9.373 9.373-24.569 0-33.941l-80-79.981C409.943 24.021 384 34.582 384 56.019V96h-58.785a12.004 12.004 0 0 0-8.773 3.812L96 336H12c-6.627 0-12 5.373-12 12v56c0 6.627 5.373 12 12 12h110.785c3.326 0 6.503-1.381 8.773-3.812L352 176h32z"/></svg>
<div class="t" style="left:530px;top:897px;font-size:14px;line-height:20px;color:#44453f;font-weight:normal;letter-spacing:0px">P200</div>
<div class="t" style="left:574.5px;top:898px;font-size:11.2px;line-height:20px;color:#4a4b45;font-weight:normal;letter-spacing:0px">P200 Model Pump Assembly</div>
<div class="a" style="left:1359.1px;top:897px;width:76.5px;height:18px;box-sizing:border-box;border:1px solid #dad6d0;border-radius:3px;background:#fff"></div>
<div class="t" style="left:1359.1px;top:898.6px;width:76.5px;text-align:center;font-size:10.5px;line-height:12px;font-weight:bold;color:#45463f;letter-spacing:-0.14px">0 / 10 shipped</div>
<div class="a" style="left:1267.8px;top:897px;width:82.3px;height:18px;box-sizing:border-box;border:1px solid #dad6d0;border-radius:3px;background:#f8f5f0"></div>
<div class="t" style="left:1267.8px;top:898.6px;width:82.3px;text-align:center;font-size:10.5px;line-height:12px;font-weight:bold;color:#93c54b;letter-spacing:-0.4px">WO in progress</div>
<div class="a" style="left:500px;top:924px;width:70px;height:25px;background:#f8f5f0"></div>
<svg style="position:absolute;left:507.9px;top:929.3px;width:14px;height:13.5px" viewBox="0 0 512 512" preserveAspectRatio="none"><path fill="#78a22f" d="M504.971 359.029c9.373 9.373 9.373 24.569 0 33.941l-80 79.984c-15.01 15.01-40.971 4.49-40.971-16.971V416h-58.785a12.004 12.004 0 0 1-8.773-3.812l-70.556-75.596 53.333-57.143L352 336h32v-39.981c0-21.438 25.943-31.998 40.971-16.971l80 79.981zM12 176h84l52.781 56.551 53.333-57.143-70.556-75.596A11.999 11.999 0 0 0 122.785 96H12c-6.627 0-12 5.373-12 12v56c0 6.627 5.373 12 12 12zm372 0v39.984c0 21.460 25.961 31.980 40.971 16.971l80-79.984c9.373-9.373 9.373-24.569 0-33.941l-80-79.981C409.943 24.021 384 34.582 384 56.019V96h-58.785a12.004 12.004 0 0 0-8.773 3.812L96 336H12c-6.627 0-12 5.373-12 12v56c0 6.627 5.373 12 12 12h110.785c3.326 0 6.503-1.381 8.773-3.812L352 176h32z"/></svg>
<div class="t" style="left:530px;top:926px;font-size:14px;line-height:20px;color:#44453f;font-weight:normal;letter-spacing:0px">P200</div>
<div class="t" style="left:574.5px;top:927px;font-size:11.2px;line-height:20px;color:#4a4b45;font-weight:normal;letter-spacing:0px">P200 Model Pump Assembly</div>
<div class="a" style="left:1359.1px;top:926px;width:76.5px;height:18px;box-sizing:border-box;border:1px solid #dad6d0;border-radius:3px;background:#fff"></div>
<div class="t" style="left:1359.1px;top:927.6px;width:76.5px;text-align:center;font-size:10.5px;line-height:12px;font-weight:bold;color:#45463f;letter-spacing:-0.14px">0 / 10 shipped</div>
<div class="a" style="left:1267.8px;top:926px;width:82.3px;height:18px;box-sizing:border-box;border:1px solid #dad6d0;border-radius:3px;background:#f8f5f0"></div>
<div class="t" style="left:1267.8px;top:927.6px;width:82.3px;text-align:center;font-size:10.5px;line-height:12px;font-weight:bold;color:#93c54b;letter-spacing:-0.4px">WO in progress</div>
<div class="a" style="left:40px;top:181px;width:1px;height:735px;background:#dad6d0"></div>
<div class="a" style="left:215px;top:181px;width:1px;height:735px;background:#dad6d0"></div>
<div class="a" style="left:491px;top:181px;width:1px;height:735px;background:#dad6d0"></div>
<div class="a" style="left:1440px;top:181px;width:1px;height:735px;background:#dad6d0"></div>
<div class="a" style="left:1639px;top:181px;width:1px;height:735px;background:#dad6d0"></div>
<div class="a" style="left:1862px;top:181px;width:1px;height:735px;background:#dad6d0"></div>
<div class="a" style="left:0;top:877px;width:1903px;height:39px;background:#fff;border-top:1px solid #a9a9a9"></div>
<div class="a" style="left:10px;top:892px;width:55.7px;height:15.7px;border-radius:8px;background:#8e8c84"></div>
<div class="t" style="left:16px;top:889px;font-size:10.5px;line-height:20px;color:#fff;font-weight:bold;letter-spacing:-0.34px">Week: 51</div>
<div class="a" style="left:70px;top:892px;width:68px;height:15.7px;border-radius:8px;background:#8e8c84"></div>
<div class="t" style="left:76.3px;top:889px;font-size:10.5px;line-height:20px;color:#fff;font-weight:bold;letter-spacing:0.44px">18/12/2023</div>
<div class="t" style="left:943.8px;top:889px;font-size:13.5px;line-height:20px;color:#343a40;font-weight:bold;letter-spacing:-0.2px">Demo</div>
<div class="a" style="left:984.8px;top:893px;width:1.5px;height:11.7px;background:#6b6b6b"></div>
<div class="a" style="left:991px;top:892px;width:62px;height:15.8px;border-radius:3px;background:#93c54b"></div>
<div class="t" style="left:994.6px;top:890px;font-size:10px;line-height:20px;color:#fff;font-weight:bold;letter-spacing:0.07px">MOULDING</div>
<div class="t" style="left:1762.8px;top:888px;font-size:14px;line-height:20px;color:#78a22f;font-weight:bold;letter-spacing:-0.68px">Fraction ERP</div>
<div class="t" style="left:1846.8px;top:888px;font-size:14px;line-height:20px;color:#3e3f3a;font-weight:normal;letter-spacing:-0.08px">© 2023</div>
</body></html>
